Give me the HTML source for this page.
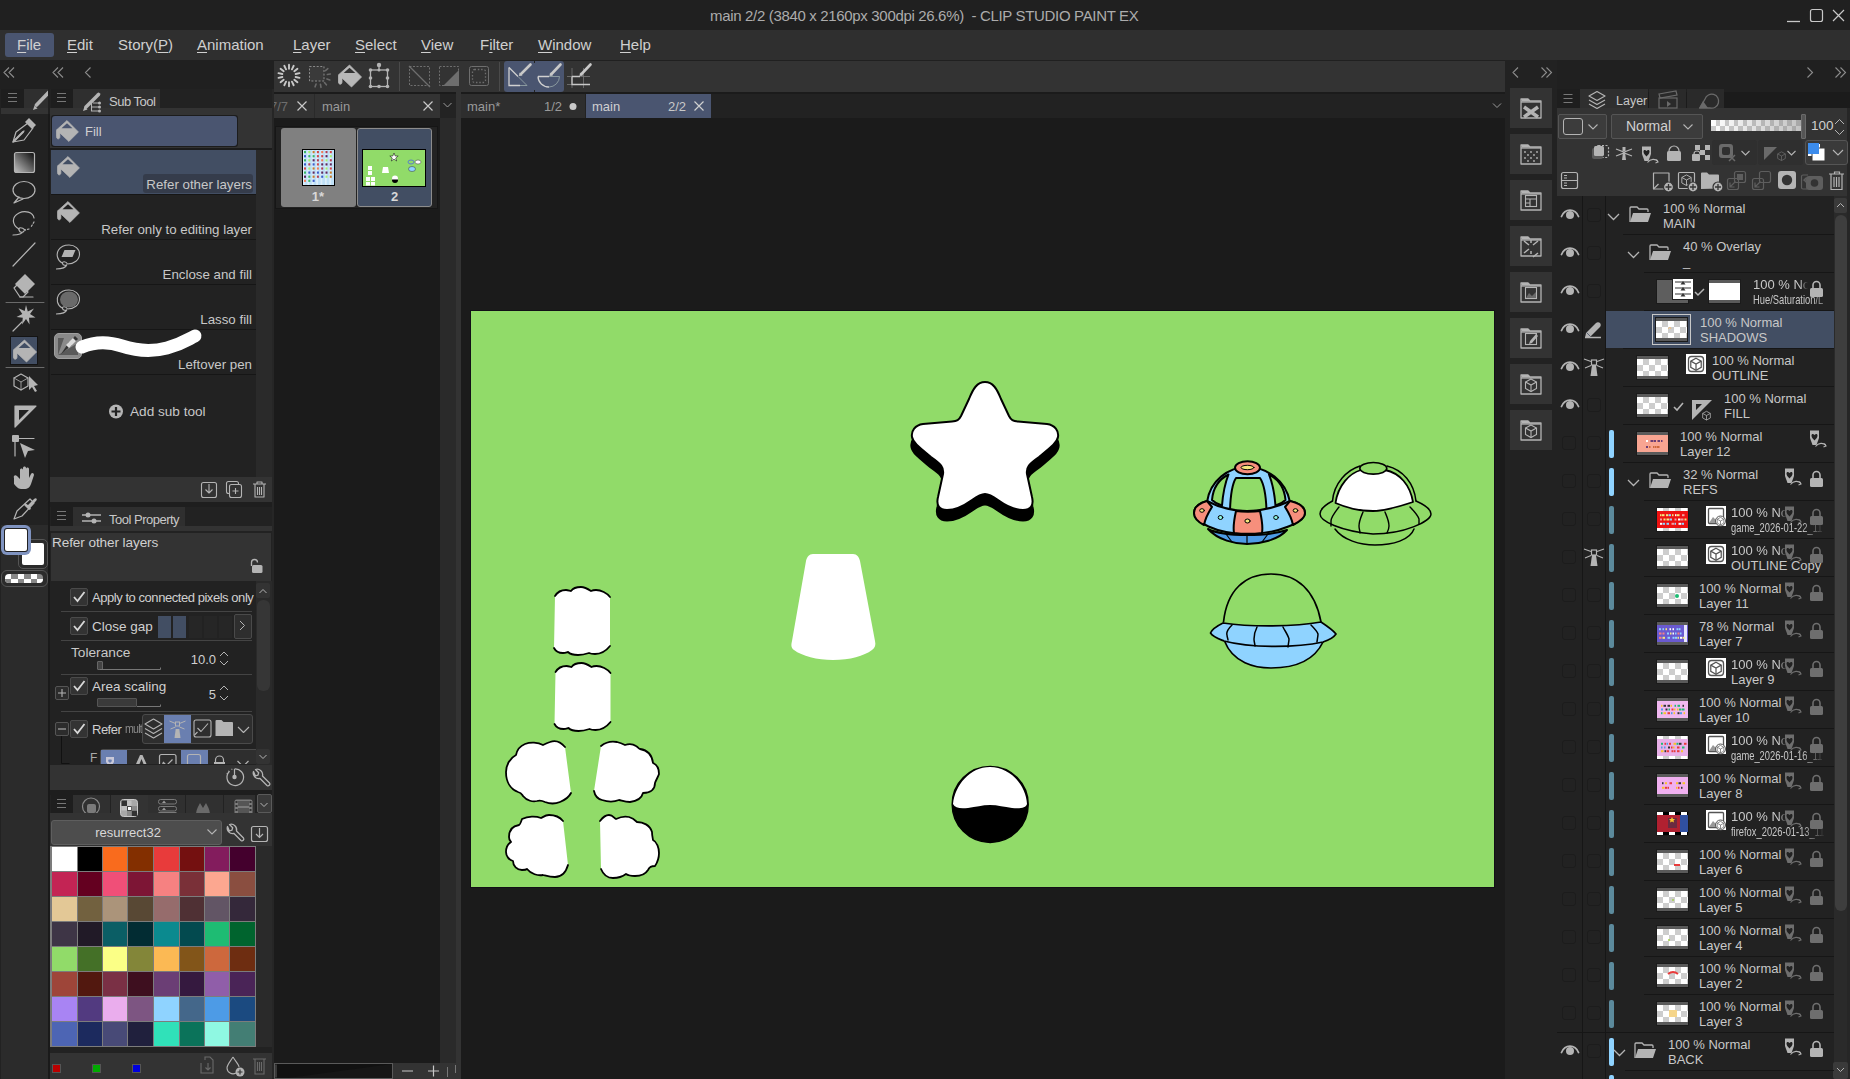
<!DOCTYPE html><html><head><meta charset="utf-8"><style>
*{margin:0;padding:0;box-sizing:border-box}
html,body{width:1850px;height:1079px;overflow:hidden;background:#1b1b1b;font-family:"Liberation Sans",sans-serif}
div,span,svg{position:absolute}
.t{white-space:nowrap;line-height:1}
</style></head><body><div style="left:0px;top:0px;width:1850px;height:30px;background:#202020;"></div>
<span class="t" style="left:710px;top:8px;font-size:15px;color:#acacac;letter-spacing:-0.33px">main 2/2 (3840 x 2160px 300dpi 26.6%)&nbsp; - CLIP STUDIO PAINT EX</span>
<div style="left:0px;top:30px;width:1850px;height:30px;background:#2f2f2f;"></div>
<div style="left:5px;top:33px;width:49px;height:24px;background:#4a5570;border-radius:3px"></div>
<span class="t" style="left:17px;top:37px;font-size:15px;color:#d0d0d0;text-decoration-thickness:1px;text-underline-offset:2px"><u>F</u>ile</span>
<span class="t" style="left:67px;top:37px;font-size:15px;color:#d0d0d0;text-decoration-thickness:1px;text-underline-offset:2px"><u>E</u>dit</span>
<span class="t" style="left:118px;top:37px;font-size:15px;color:#d0d0d0;text-decoration-thickness:1px;text-underline-offset:2px">Story(<u>P</u>)</span>
<span class="t" style="left:197px;top:37px;font-size:15px;color:#d0d0d0;text-decoration-thickness:1px;text-underline-offset:2px"><u>A</u>nimation</span>
<span class="t" style="left:293px;top:37px;font-size:15px;color:#d0d0d0;text-decoration-thickness:1px;text-underline-offset:2px"><u>L</u>ayer</span>
<span class="t" style="left:355px;top:37px;font-size:15px;color:#d0d0d0;text-decoration-thickness:1px;text-underline-offset:2px"><u>S</u>elect</span>
<span class="t" style="left:421px;top:37px;font-size:15px;color:#d0d0d0;text-decoration-thickness:1px;text-underline-offset:2px"><u>V</u>iew</span>
<span class="t" style="left:480px;top:37px;font-size:15px;color:#d0d0d0;text-decoration-thickness:1px;text-underline-offset:2px">F<u>i</u>lter</span>
<span class="t" style="left:538px;top:37px;font-size:15px;color:#d0d0d0;text-decoration-thickness:1px;text-underline-offset:2px"><u>W</u>indow</span>
<span class="t" style="left:620px;top:37px;font-size:15px;color:#d0d0d0;text-decoration-thickness:1px;text-underline-offset:2px"><u>H</u>elp</span>
<div style="left:0px;top:60px;width:1850px;height:32px;background:#202020;"></div>
<div style="left:274px;top:61px;width:1231px;height:31px;background:#333333;"></div>
<div style="left:0px;top:89px;width:48px;height:990px;background:#222222;"></div>
<div style="left:1px;top:89px;width:23px;height:19px;background:#1e1e1e;"></div>
<div style="left:24px;top:89px;width:24px;height:19px;background:#2f2f2f;"></div>
<div style="left:1px;top:108px;width:47px;height:6px;background:#333333;"></div>
<div style="left:48px;top:114px;width:2px;height:965px;background:#1a1a1a;"></div>
<div style="left:48px;top:89px;width:2px;height:25px;background:#202020;"></div>
<div style="left:10px;top:336px;width:28px;height:29px;background:#424e63;border:1px solid #141414"></div>
<div style="left:1px;top:525px;width:47px;height:554px;background:#2b2b2b;"></div>
<div style="left:18px;top:539px;width:30px;height:30px;background:#2b2b2b;border:1.5px solid #555;border-radius:5px"></div>
<div style="left:22px;top:543px;width:22px;height:22px;background:#ffffff;border-radius:2px"></div>
<div style="left:1px;top:525px;width:30px;height:30px;background:#7f93c0;border-radius:6px"></div>
<div style="left:4px;top:528px;width:24px;height:24px;background:#222;border-radius:3px"></div>
<div style="left:5px;top:529px;width:22px;height:22px;background:#ffffff;border-radius:2px"></div>
<div style="left:1px;top:570px;width:47px;height:17px;background:#2b2b2b;border:1.5px solid #555;border-radius:6px"></div>
<div style="left:5px;top:574px;width:38px;height:9px;border-radius:4px;overflow:hidden;background:repeating-linear-gradient(90deg,#fff 0 6.5px,#888 6.5px 13px)"><div style="left:0;top:4.5px;width:38px;height:4.5px;background:repeating-linear-gradient(90deg,#888 0 6.5px,#fff 6.5px 13px)"></div></div>
<div style="left:50px;top:89px;width:222px;height:990px;background:#222222;"></div>
<div style="left:51px;top:89px;width:22px;height:19px;background:#1e1e1e;"></div>
<div style="left:73px;top:89px;width:87px;height:19px;background:#2f2f2f;"></div>
<div style="left:50px;top:108px;width:222px;height:6px;background:#333333;"></div>
<span class="t" style="left:109px;top:95px;font-size:13px;color:#c8c8c8;letter-spacing:-0.5px">Sub Tool</span>
<div style="left:50px;top:114px;width:222px;height:34px;background:#333333;"></div>
<div style="left:51px;top:115px;width:187px;height:32px;background:#1c1c1c;border-radius:3px"></div>
<div style="left:52px;top:116px;width:185px;height:30px;background:#4a5570;border-radius:3px"></div>
<span class="t" style="left:85px;top:125px;font-size:13px;color:#d0d0d0;">Fill</span>
<div style="left:50px;top:148px;width:222px;height:2px;background:#1c1c1c;"></div>
<div style="left:50px;top:150px;width:206px;height:327px;background:#222222;"></div>
<div style="left:256px;top:150px;width:16px;height:327px;background:#2a2a2a;"></div>
<div style="left:51px;top:150px;width:205px;height:44px;background:#424e63;"></div>
<div style="left:143px;top:174px;width:110px;height:19px;background:#353c4b;border-radius:3px"></div>
<div style="left:51px;top:194px;width:205px;height:1px;background:#161616;"></div>
<div style="left:51px;top:239px;width:205px;height:1px;background:#161616;"></div>
<div style="left:51px;top:284px;width:205px;height:1px;background:#161616;"></div>
<div style="left:51px;top:329px;width:205px;height:1px;background:#161616;"></div>
<div style="left:51px;top:374px;width:205px;height:1px;background:#161616;"></div>
<span class="t" style="right:1598px;top:177.5px;font-size:13.3px;color:#c8c8c8;">Refer other layers</span>
<span class="t" style="right:1598px;top:222.5px;font-size:13.3px;color:#c8c8c8;">Refer only to editing layer</span>
<span class="t" style="right:1598px;top:267.5px;font-size:13.3px;color:#c8c8c8;">Enclose and fill</span>
<span class="t" style="right:1598px;top:312.5px;font-size:13.3px;color:#c8c8c8;">Lasso fill</span>
<span class="t" style="right:1598px;top:357.5px;font-size:13.3px;color:#c8c8c8;">Leftover pen</span>
<div style="left:54px;top:333px;width:28px;height:26px;background:#8a8a8a;border-radius:5px;border:1px solid #a0a0a0"></div>
<span class="t" style="left:130px;top:404.5px;font-size:13.6px;color:#c8c8c8;">Add sub tool</span>
<div style="left:50px;top:477px;width:222px;height:25px;background:#333333;"></div>
<div style="left:50px;top:502px;width:222px;height:5px;background:#1e1e1e;"></div>
<div style="left:51px;top:507px;width:22px;height:19px;background:#1e1e1e;"></div>
<div style="left:73px;top:507px;width:112px;height:19px;background:#2f2f2f;"></div>
<div style="left:50px;top:526px;width:222px;height:5px;background:#333333;"></div>
<span class="t" style="left:109px;top:513px;font-size:13px;color:#c8c8c8;letter-spacing:-0.5px">Tool Property</span>
<div style="left:50px;top:531px;width:222px;height:2px;background:#222222;"></div>
<div style="left:51px;top:533px;width:220px;height:48px;background:#333333;"></div>
<span class="t" style="left:52px;top:535.5px;font-size:13.6px;color:#d0d0d0;letter-spacing:-0.1px">Refer other layers</span>
<div style="left:50px;top:581px;width:206px;height:184px;background:#222222;"></div>
<div style="left:256px;top:581px;width:16px;height:184px;background:#2a2a2a;"></div>
<div style="left:256px;top:583px;width:14px;height:15px;background:#333333;border-radius:2px"></div>
<div style="left:257px;top:600px;width:13px;height:91px;background:#363636;border-radius:6px"></div>
<div style="left:256px;top:749px;width:14px;height:15px;background:#333333;border-radius:2px"></div>
<div style="left:61px;top:611px;width:191px;height:1px;background:#444444;"></div>
<div style="left:61px;top:640px;width:191px;height:1px;background:#444444;"></div>
<div style="left:61px;top:674px;width:191px;height:1px;background:#444444;"></div>
<div style="left:61px;top:711px;width:191px;height:1px;background:#444444;"></div>
<div style="left:70px;top:588px;width:18px;height:18px;background:#333333;border:1px solid #4a4a4a;border-radius:2px"></div>
<span class="t" style="left:92px;top:591px;font-size:13px;color:#d0d0d0;letter-spacing:-0.45px">Apply to connected pixels only</span>
<div style="left:70px;top:617px;width:18px;height:18px;background:#333333;border:1px solid #4a4a4a;border-radius:2px"></div>
<span class="t" style="left:92px;top:619.5px;font-size:13.5px;color:#d0d0d0;">Close gap</span>
<div style="left:158px;top:616px;width:13px;height:22px;background:#424e63;"></div>
<div style="left:173px;top:616px;width:13px;height:22px;background:#424e63;"></div>
<div style="left:189px;top:616px;width:13px;height:22px;background:#262626;"></div>
<div style="left:204px;top:616px;width:13px;height:22px;background:#262626;"></div>
<div style="left:219px;top:616px;width:13px;height:22px;background:#262626;"></div>
<div style="left:234px;top:614px;width:18px;height:25px;background:#2e2e2e;border:1px solid #4a4a4a;border-radius:2px"></div>
<span class="t" style="left:71px;top:645.5px;font-size:13.7px;color:#c8c8c8;">Tolerance</span>
<div style="left:97px;top:661px;width:6px;height:9px;background:#444;border:1px solid #666;border-radius:1px"></div>
<span class="t" style="right:1634px;top:653px;font-size:13px;color:#d0d0d0;">10.0</span>
<div style="left:55px;top:686px;width:14px;height:14px;background:#2c2c2c;border:1px solid #555;border-radius:2px"></div>
<div style="left:70px;top:677px;width:18px;height:18px;background:#333333;border:1px solid #4a4a4a;border-radius:2px"></div>
<span class="t" style="left:92px;top:679.5px;font-size:13.5px;color:#d0d0d0;">Area scaling</span>
<div style="left:97px;top:698px;width:40px;height:9px;background:#3a3a3a;border:1px solid #555;border-radius:1px"></div>
<span class="t" style="right:1634px;top:688px;font-size:13px;color:#d0d0d0;">5</span>
<div style="left:55px;top:722px;width:14px;height:14px;background:#2c2c2c;border:1px solid #555;border-radius:2px"></div>
<div style="left:70px;top:720px;width:18px;height:18px;background:#333333;border:1px solid #4a4a4a;border-radius:2px"></div>
<span class="t" style="left:92px;top:723px;font-size:13px;color:#d0d0d0;letter-spacing:-0.5px">Refer</span>
<span class="t" style="left:125px;top:723px;font-size:12.5px;color:#8a8a8a;letter-spacing:-0.9px;transform:scaleX(0.85);transform-origin:0 0">multi</span>
<div style="left:142px;top:714px;width:111px;height:30px;background:#2e2e2e;border:1px solid #4a4a4a;border-radius:3px"></div>
<div style="left:164px;top:715px;width:27px;height:28px;background:#6a7fb0;"></div>
<div style="left:50px;top:744px;width:206px;height:20px;overflow:hidden"><div style="left:50px;top:4.5px;width:203px;height:30px;background:#2e2e2e;border:1px solid #4a4a4a;border-radius:3px"></div><div style="left:50.5px;top:5.5px;width:26.5px;height:28px;background:#6a7fb0"></div><div style="left:131px;top:5.5px;width:27px;height:28px;background:#6a7fb0"></div><span class="t" style="left:40px;top:8px;font-size:12px;color:#aaa">F</span></div>
<div style="left:50px;top:765px;width:222px;height:25px;background:#333333;"></div>
<div style="left:50px;top:790px;width:222px;height:5px;background:#1e1e1e;"></div>
<div style="left:51px;top:795px;width:22px;height:18px;background:#1e1e1e;"></div>
<div style="left:73px;top:795px;width:37px;height:18px;background:#303030;"></div>
<div style="left:111px;top:795px;width:36px;height:18px;background:#333333;"></div>
<div style="left:148px;top:795px;width:37px;height:18px;background:#303030;"></div>
<div style="left:186px;top:795px;width:37px;height:18px;background:#303030;"></div>
<div style="left:224px;top:795px;width:31px;height:18px;background:#303030;"></div>
<div style="left:111px;top:795px;width:37px;height:25px;background:#333333;"></div>
<div style="left:257px;top:794px;width:15px;height:19px;background:#3a3a3a;border:1px solid #5a5a5a;border-radius:2px"></div>
<div style="left:50px;top:813px;width:222px;height:7px;background:#333333;"></div>
<div style="left:50px;top:820px;width:222px;height:26px;background:#333333;"></div>
<div style="left:51px;top:820px;width:171px;height:25px;background:#4d4d4d;border:1px solid #5e5e5e;border-radius:3px"></div>
<span class="t" style="left:-72px;width:400px;text-align:center;top:826px;font-size:13px;color:#d8d8d8;">resurrect32</span>
<div style="left:50px;top:846px;width:206px;height:201px;background:#7c7c7c;"></div>
<div style="left:256px;top:846px;width:16px;height:201px;background:#2a2a2a;"></div>
<div style="left:52px;top:847px;width:25px;height:24px;background:#ffffff;"></div>
<div style="left:78px;top:847px;width:24px;height:24px;background:#000000;"></div>
<div style="left:103px;top:847px;width:24px;height:24px;background:#f96b1d;"></div>
<div style="left:128px;top:847px;width:25px;height:24px;background:#832f00;"></div>
<div style="left:154px;top:847px;width:25px;height:24px;background:#e83b3b;"></div>
<div style="left:180px;top:847px;width:24px;height:24px;background:#741010;"></div>
<div style="left:205px;top:847px;width:24px;height:24px;background:#831c5d;"></div>
<div style="left:230px;top:847px;width:25px;height:24px;background:#44002d;"></div>
<div style="left:52px;top:872px;width:25px;height:24px;background:#c32454;"></div>
<div style="left:78px;top:872px;width:24px;height:24px;background:#640020;"></div>
<div style="left:103px;top:872px;width:24px;height:24px;background:#f04f78;"></div>
<div style="left:128px;top:872px;width:25px;height:24px;background:#7d1535;"></div>
<div style="left:154px;top:872px;width:25px;height:24px;background:#f68181;"></div>
<div style="left:180px;top:872px;width:24px;height:24px;background:#7a3038;"></div>
<div style="left:205px;top:872px;width:24px;height:24px;background:#fca790;"></div>
<div style="left:230px;top:872px;width:25px;height:24px;background:#8a4e40;"></div>
<div style="left:52px;top:897px;width:25px;height:24px;background:#e3c896;"></div>
<div style="left:78px;top:897px;width:24px;height:24px;background:#72613f;"></div>
<div style="left:103px;top:897px;width:24px;height:24px;background:#ab947a;"></div>
<div style="left:128px;top:897px;width:25px;height:24px;background:#584834;"></div>
<div style="left:154px;top:897px;width:25px;height:24px;background:#966c6c;"></div>
<div style="left:180px;top:897px;width:24px;height:24px;background:#4f3034;"></div>
<div style="left:205px;top:897px;width:24px;height:24px;background:#625565;"></div>
<div style="left:230px;top:897px;width:25px;height:24px;background:#34283a;"></div>
<div style="left:52px;top:922px;width:25px;height:24px;background:#3e3546;"></div>
<div style="left:78px;top:922px;width:24px;height:24px;background:#211a27;"></div>
<div style="left:103px;top:922px;width:24px;height:24px;background:#0b5e65;"></div>
<div style="left:128px;top:922px;width:25px;height:24px;background:#022c33;"></div>
<div style="left:154px;top:922px;width:25px;height:24px;background:#0b8a8f;"></div>
<div style="left:180px;top:922px;width:24px;height:24px;background:#034a4f;"></div>
<div style="left:205px;top:922px;width:24px;height:24px;background:#1ebc73;"></div>
<div style="left:230px;top:922px;width:25px;height:24px;background:#00642e;"></div>
<div style="left:52px;top:947px;width:25px;height:24px;background:#91db69;"></div>
<div style="left:78px;top:947px;width:24px;height:24px;background:#447027;"></div>
<div style="left:103px;top:947px;width:24px;height:24px;background:#fbff86;"></div>
<div style="left:128px;top:947px;width:25px;height:24px;background:#838639;"></div>
<div style="left:154px;top:947px;width:25px;height:24px;background:#fbb954;"></div>
<div style="left:180px;top:947px;width:24px;height:24px;background:#825519;"></div>
<div style="left:205px;top:947px;width:24px;height:24px;background:#cd683d;"></div>
<div style="left:230px;top:947px;width:25px;height:24px;background:#6e2d11;"></div>
<div style="left:52px;top:972px;width:25px;height:24px;background:#9e4539;"></div>
<div style="left:78px;top:972px;width:24px;height:24px;background:#52180f;"></div>
<div style="left:103px;top:972px;width:24px;height:24px;background:#7a3045;"></div>
<div style="left:128px;top:972px;width:25px;height:24px;background:#3e0f1f;"></div>
<div style="left:154px;top:972px;width:25px;height:24px;background:#6b3e75;"></div>
<div style="left:180px;top:972px;width:24px;height:24px;background:#35193f;"></div>
<div style="left:205px;top:972px;width:24px;height:24px;background:#905ea9;"></div>
<div style="left:230px;top:972px;width:25px;height:24px;background:#4a2457;"></div>
<div style="left:52px;top:997px;width:25px;height:24px;background:#a884f3;"></div>
<div style="left:78px;top:997px;width:24px;height:24px;background:#523a80;"></div>
<div style="left:103px;top:997px;width:24px;height:24px;background:#eaaded;"></div>
<div style="left:128px;top:997px;width:25px;height:24px;background:#7d5582;"></div>
<div style="left:154px;top:997px;width:25px;height:24px;background:#8fd3ff;"></div>
<div style="left:180px;top:997px;width:24px;height:24px;background:#44678a;"></div>
<div style="left:205px;top:997px;width:24px;height:24px;background:#4d9be6;"></div>
<div style="left:230px;top:997px;width:25px;height:24px;background:#1b4a80;"></div>
<div style="left:52px;top:1022px;width:25px;height:24px;background:#4d65b4;"></div>
<div style="left:78px;top:1022px;width:24px;height:24px;background:#1c2a5e;"></div>
<div style="left:103px;top:1022px;width:24px;height:24px;background:#484a77;"></div>
<div style="left:128px;top:1022px;width:25px;height:24px;background:#20203d;"></div>
<div style="left:154px;top:1022px;width:25px;height:24px;background:#30e1b9;"></div>
<div style="left:180px;top:1022px;width:24px;height:24px;background:#0b735a;"></div>
<div style="left:205px;top:1022px;width:24px;height:24px;background:#8ff8e2;"></div>
<div style="left:230px;top:1022px;width:25px;height:24px;background:#437e74;"></div>
<div style="left:50px;top:1047px;width:222px;height:6px;background:#222222;"></div>
<div style="left:50px;top:1053px;width:222px;height:26px;background:#333333;"></div>
<div style="left:52px;top:1064px;width:9px;height:9px;background:#bb0000;border:1px solid #555"></div>
<div style="left:92px;top:1064px;width:9px;height:9px;background:#00aa00;border:1px solid #555"></div>
<div style="left:132px;top:1064px;width:9px;height:9px;background:#0000dd;border:1px solid #555"></div>
<div style="left:504px;top:61px;width:60px;height:30.5px;background:#4a5570;border-radius:3px"></div>
<div style="left:533.5px;top:61px;width:1px;height:1.5px;background:#222;"></div>
<div style="left:533.5px;top:90px;width:1px;height:1.5px;background:#222;"></div>
<div style="left:272px;top:89px;width:2px;height:990px;background:#262626;"></div>
<div style="left:274px;top:94px;width:166px;height:24px;background:#2a2a2a;"></div>
<div style="left:274px;top:94px;width:40px;height:24px;background:#333333;"></div>
<div style="left:315px;top:94px;width:125px;height:24px;background:#333333;"></div>
<div style="left:274px;top:94px;width:40px;height:24px;overflow:hidden"><span class="t" style="left:-4px;top:6px;font-size:13px;color:#6e6e6e">7/7</span></div>
<span class="t" style="left:322px;top:100px;font-size:13px;color:#9a9a9a;">main</span>
<div style="left:440px;top:94px;width:21px;height:24px;background:#232323;"></div>
<div style="left:274px;top:118px;width:166px;height:945px;background:#1b1b1b;"></div>
<div style="left:440px;top:118px;width:16px;height:945px;background:#2a2a2a;"></div>
<div style="left:456px;top:92px;width:5px;height:987px;background:#333333;"></div>
<div style="left:275px;top:126px;width:163px;height:83px;background:#232323;border:1px solid #161616"></div>
<div style="left:281px;top:128px;width:75px;height:79px;background:#808080;border-radius:3px"></div>
<div style="left:357px;top:128px;width:75px;height:79px;background:#424e63;border:1px solid #8c8c8c;border-radius:3px"></div>
<div style="left:302px;top:149px;width:33px;height:37px;background:#000;"></div>
<div style="left:303px;top:150px;width:31px;height:35px;background:#bfe0f7;background-image:linear-gradient(90deg,rgba(255,255,255,.45) 50%,transparent 50%);background-size:4.4px 4px"></div>
<span class="t" style="left:118px;width:400px;text-align:center;top:190px;font-size:13px;color:#d8d8d8;font-weight:bold">1*</span>
<div style="left:362px;top:149px;width:64px;height:38px;background:#000;"></div>
<div style="left:363px;top:150px;width:62px;height:36px;background:#91db69;"></div>
<span class="t" style="left:194.5px;width:400px;text-align:center;top:190px;font-size:13px;color:#d8d8d8;font-weight:bold">2</span>
<div style="left:274px;top:1063px;width:182px;height:16px;background:#333333;"></div>
<div style="left:274px;top:1063px;width:119px;height:16px;background:#111111;border:1px solid #5a5a5a"></div>
<div style="left:461px;top:94px;width:1044px;height:24px;background:#222222;"></div>
<div style="left:461px;top:94px;width:124px;height:24px;background:#2e2e2e;"></div>
<span class="t" style="left:467px;top:100px;font-size:13px;color:#9a9a9a;">main*</span>
<span class="t" style="left:544px;top:100px;font-size:13px;color:#9a9a9a;">1/2</span>
<div style="left:586px;top:94px;width:125px;height:24px;background:#4a5570;"></div>
<span class="t" style="left:592px;top:100px;font-size:13px;color:#d0d0d0;">main</span>
<span class="t" style="left:668px;top:100px;font-size:13px;color:#c8c8c8;">2/2</span>
<div style="left:461px;top:118px;width:1044px;height:961px;background:#1b1b1b;"></div>
<div style="left:470px;top:310px;width:1025px;height:578px;background:#120f16;"></div>
<div style="left:471px;top:311px;width:1023px;height:576px;background:#91db69;"></div>
<div style="left:1505px;top:60px;width:52px;height:1019px;background:#222222;"></div>
<div style="left:1555px;top:92px;width:2px;height:987px;background:#222222;"></div>
<div style="left:1510px;top:88px;width:42px;height:40px;background:#333333;"></div>
<div style="left:1510px;top:134px;width:42px;height:40px;background:#333333;"></div>
<div style="left:1510px;top:180px;width:42px;height:40px;background:#333333;"></div>
<div style="left:1510px;top:226px;width:42px;height:40px;background:#333333;"></div>
<div style="left:1510px;top:272px;width:42px;height:40px;background:#333333;"></div>
<div style="left:1510px;top:318px;width:42px;height:40px;background:#333333;"></div>
<div style="left:1510px;top:364px;width:42px;height:40px;background:#333333;"></div>
<div style="left:1510px;top:410px;width:42px;height:40px;background:#333333;"></div>
<div style="left:1557px;top:60px;width:293px;height:32px;background:#202020;"></div>
<div style="left:1557px;top:89px;width:23px;height:19px;background:#1e1e1e;"></div>
<div style="left:1580px;top:89px;width:68px;height:19px;background:#2f2f2f;"></div>
<div style="left:1649px;top:89px;width:37px;height:19px;background:#2a2a2a;"></div>
<div style="left:1687px;top:89px;width:37px;height:19px;background:#2a2a2a;"></div>
<span class="t" style="left:1616px;top:95px;font-size:12.5px;color:#c8c8c8;">Layer</span>
<div style="left:1557px;top:108px;width:290px;height:88px;background:#333333;"></div>
<div style="left:1847px;top:108px;width:3px;height:971px;background:#262626;"></div>
<div style="left:1558px;top:114px;width:49px;height:25px;background:#3c3c3c;border:1px solid #555;border-radius:2px"></div>
<div style="left:1563px;top:118px;width:20px;height:17px;background:#3c3c3c;border:1.3px solid #b4b4b4;border-radius:3px"></div>
<div style="left:1611px;top:114px;width:92px;height:25px;background:#3c3c3c;border:1px solid #555;border-radius:2px"></div>
<span class="t" style="left:1626px;top:119px;font-size:14px;color:#d0d0d0;">Normal</span>
<div style="left:1711px;top:120px;width:91px;height:11px;background:linear-gradient(90deg,rgba(51,51,51,0) 0%,rgba(120,120,120,.45) 100%),repeating-linear-gradient(90deg,#ffffff 0 4.5px,#cccccc 4.5px 9px)"><div style="left:0;top:5.5px;width:91px;height:5.5px;background:linear-gradient(90deg,rgba(51,51,51,0) 0%,rgba(120,120,120,.45) 100%),repeating-linear-gradient(90deg,#cccccc 0 4.5px,#ffffff 4.5px 9px)"></div></div>
<div style="left:1801px;top:114px;width:5px;height:25px;background:#555555;border:1px solid #6a6a6a;border-radius:1px"></div>
<span class="t" style="left:1811px;top:119px;font-size:13.5px;color:#d0d0d0;">100</span>
<div style="left:1712px;top:140px;width:45px;height:25px;background:#2f2f2f;border-radius:3px"></div>
<div style="left:1758px;top:140px;width:45px;height:25px;background:#2f2f2f;border-radius:3px"></div>
<div style="left:1805px;top:140px;width:43px;height:25px;background:#3a3a3a;border:1px solid #555;border-radius:3px"></div>
<div style="left:1557px;top:196px;width:277px;height:883px;background:#222222;"></div>
<div style="left:1834px;top:196px;width:13px;height:883px;background:#2a2a2a;"></div>
<div style="left:1834px;top:198px;width:13px;height:15px;background:#3a3a3a;border-radius:2px"></div>
<div style="left:1835px;top:215px;width:12px;height:696px;background:#3e3e3e;border-radius:6px"></div>
<div style="left:1833px;top:1062px;width:15px;height:17px;background:#3a3a3a;border-radius:2px"></div>
<div style="left:1582px;top:196px;width:1px;height:883px;background:#161616;"></div>
<div style="left:1605px;top:196px;width:1px;height:883px;background:#161616;"></div>
<div style="left:1587px;top:208px;width:14px;height:14px;background:transparent;border:1.5px solid #1c1c1c;border-radius:3px"></div>
<span class="t" style="left:1663px;top:202px;font-size:13px;color:#c8c8c8;">100 % Normal</span>
<span class="t" style="left:1663px;top:217px;font-size:13px;color:#c8c8c8;">MAIN</span>
<div style="left:1623px;top:234px;width:211px;height:1px;background:#161616;"></div>
<div style="left:1587px;top:246px;width:14px;height:14px;background:transparent;border:1.5px solid #1c1c1c;border-radius:3px"></div>
<span class="t" style="left:1683px;top:240px;font-size:13px;color:#c8c8c8;">40 % Overlay</span>
<span class="t" style="left:1683px;top:255px;font-size:13px;color:#c8c8c8;">_</span>
<div style="left:1644px;top:272px;width:190px;height:1px;background:#161616;"></div>
<div style="left:1587px;top:284px;width:14px;height:14px;background:transparent;border:1.5px solid #1c1c1c;border-radius:3px"></div>
<div style="left:1656px;top:279px;width:33px;height:25px;background:#1b1b1b;"></div>
<div style="left:1657px;top:280px;width:31px;height:23px;background:#5e5e5e;"></div>
<div style="left:1672px;top:278px;width:22px;height:22px;background:#ffffff;border:1px solid #222"></div>
<div style="left:1708px;top:279px;width:33px;height:25px;background:#1b1b1b;"></div>
<div style="left:1709px;top:280px;width:31px;height:3px;background:#5a5a5a;"></div>
<div style="left:1709px;top:300px;width:31px;height:3px;background:#5a5a5a;"></div>
<div style="left:1709px;top:283px;width:31px;height:17px;background:#ffffff;"></div>
<span class="t" style="left:1753px;top:278px;font-size:13px;color:#c8c8c8;height:16px;width:55px;overflow:hidden;-webkit-mask-image:linear-gradient(90deg,#000 85%,transparent)">100 % Normal</span>
<span class="t" style="left:1753px;top:293px;font-size:13px;color:#c8c8c8;transform:scaleX(0.72);transform-origin:0 0;height:16px;width:111px;overflow:hidden;-webkit-mask-image:linear-gradient(90deg,#000 75%,transparent)">Hue/Saturation/L</span>
<div style="left:1644px;top:310px;width:190px;height:1px;background:#161616;"></div>
<div style="left:1606px;top:311px;width:228px;height:37px;background:#424e63;"></div>
<div style="left:1652px;top:314px;width:39px;height:31px;background:transparent;border:1px solid #c8c8c8"></div>
<div style="left:1655px;top:317px;width:33px;height:25px;background:#1b1b1b;"></div>
<div style="left:1656px;top:318px;width:31px;height:3px;background:#5a5a5a;"></div>
<div style="left:1656px;top:338px;width:31px;height:3px;background:#5a5a5a;"></div>
<div style="left:1656px;top:321px;width:31px;height:17px;background-color:#fff;background-image:linear-gradient(45deg,#cdcdcd 25%,transparent 25%,transparent 75%,#cdcdcd 75%),linear-gradient(45deg,#cdcdcd 25%,transparent 25%,transparent 75%,#cdcdcd 75%);background-size:12px 12px;background-position:0 0,6px 6px"></div>
<span class="t" style="left:1700px;top:316px;font-size:13px;color:#c8c8c8;">100 % Normal</span>
<span class="t" style="left:1700px;top:331px;font-size:13px;color:#c8c8c8;">SHADOWS</span>
<div style="left:1623px;top:348px;width:211px;height:1px;background:#161616;"></div>
<div style="left:1636px;top:355px;width:33px;height:25px;background:#1b1b1b;"></div>
<div style="left:1637px;top:356px;width:31px;height:3px;background:#5a5a5a;"></div>
<div style="left:1637px;top:376px;width:31px;height:3px;background:#5a5a5a;"></div>
<div style="left:1637px;top:359px;width:31px;height:17px;background-color:#fff;background-image:linear-gradient(45deg,#cdcdcd 25%,transparent 25%,transparent 75%,#cdcdcd 75%),linear-gradient(45deg,#cdcdcd 25%,transparent 25%,transparent 75%,#cdcdcd 75%);background-size:12px 12px;background-position:0 0,6px 6px"></div>
<div style="left:1685px;top:353px;width:22px;height:22px;background:#ffffff;border:1px solid #222"></div>
<span class="t" style="left:1712px;top:354px;font-size:13px;color:#c8c8c8;">100 % Normal</span>
<span class="t" style="left:1712px;top:369px;font-size:13px;color:#c8c8c8;">OUTLINE</span>
<div style="left:1623px;top:386px;width:211px;height:1px;background:#161616;"></div>
<div style="left:1587px;top:398px;width:14px;height:14px;background:transparent;border:1.5px solid #1c1c1c;border-radius:3px"></div>
<div style="left:1636px;top:393px;width:33px;height:25px;background:#1b1b1b;"></div>
<div style="left:1637px;top:394px;width:31px;height:3px;background:#5a5a5a;"></div>
<div style="left:1637px;top:414px;width:31px;height:3px;background:#5a5a5a;"></div>
<div style="left:1637px;top:397px;width:31px;height:17px;background-color:#fff;background-image:linear-gradient(45deg,#cdcdcd 25%,transparent 25%,transparent 75%,#cdcdcd 75%),linear-gradient(45deg,#cdcdcd 25%,transparent 25%,transparent 75%,#cdcdcd 75%);background-size:12px 12px;background-position:0 0,6px 6px"></div>
<span class="t" style="left:1724px;top:392px;font-size:13px;color:#c8c8c8;">100 % Normal</span>
<span class="t" style="left:1724px;top:407px;font-size:13px;color:#c8c8c8;">FILL</span>
<div style="left:1623px;top:424px;width:211px;height:1px;background:#161616;"></div>
<div style="left:1562px;top:436px;width:14px;height:14px;background:transparent;border:1.5px solid #1c1c1c;border-radius:3px"></div>
<div style="left:1587px;top:436px;width:14px;height:14px;background:transparent;border:1.5px solid #1c1c1c;border-radius:3px"></div>
<div style="left:1609px;top:430px;width:5px;height:28px;background:#8fd3ff;border-radius:2px"></div>
<div style="left:1636px;top:431px;width:33px;height:25px;background:#1b1b1b;"></div>
<div style="left:1637px;top:432px;width:31px;height:3px;background:#5a5a5a;"></div>
<div style="left:1637px;top:452px;width:31px;height:3px;background:#5a5a5a;"></div>
<div style="left:1637px;top:435px;width:31px;height:17px;background:#f8a592;"></div>
<span class="t" style="left:1680px;top:430px;font-size:13px;color:#c8c8c8;">100 % Normal</span>
<span class="t" style="left:1680px;top:445px;font-size:13px;color:#c8c8c8;">Layer 12</span>
<div style="left:1623px;top:462px;width:211px;height:1px;background:#161616;"></div>
<div style="left:1562px;top:474px;width:14px;height:14px;background:transparent;border:1.5px solid #1c1c1c;border-radius:3px"></div>
<div style="left:1587px;top:474px;width:14px;height:14px;background:transparent;border:1.5px solid #1c1c1c;border-radius:3px"></div>
<div style="left:1609px;top:468px;width:5px;height:28px;background:#8fd3ff;border-radius:2px"></div>
<span class="t" style="left:1683px;top:468px;font-size:13px;color:#c8c8c8;">32 % Normal</span>
<span class="t" style="left:1683px;top:483px;font-size:13px;color:#c8c8c8;">REFS</span>
<div style="left:1644px;top:500px;width:190px;height:1px;background:#161616;"></div>
<div style="left:1562px;top:512px;width:14px;height:14px;background:transparent;border:1.5px solid #1c1c1c;border-radius:3px"></div>
<div style="left:1587px;top:512px;width:14px;height:14px;background:transparent;border:1.5px solid #1c1c1c;border-radius:3px"></div>
<div style="left:1609px;top:506px;width:5px;height:28px;background:#5c8a9c;border-radius:2px"></div>
<div style="left:1656px;top:507px;width:33px;height:25px;background:#1b1b1b;"></div>
<div style="left:1657px;top:508px;width:31px;height:3px;background:#5a5a5a;"></div>
<div style="left:1657px;top:528px;width:31px;height:3px;background:#5a5a5a;"></div>
<div style="left:1657px;top:511px;width:31px;height:17px;background:#ee1111;"></div>
<div style="left:1705px;top:505px;width:22px;height:22px;background:#ffffff;border:1px solid #222"></div>
<span class="t" style="left:1731px;top:506px;font-size:13px;color:#c8c8c8;height:16px;width:56px;overflow:hidden;-webkit-mask-image:linear-gradient(90deg,#000 85%,transparent)">100 % Normal</span>
<span class="t" style="left:1731px;top:521px;font-size:13px;color:#c8c8c8;transform:scaleX(0.72);transform-origin:0 0;height:16px;width:131px;overflow:hidden;-webkit-mask-image:linear-gradient(90deg,#000 75%,transparent)">game_2026-01-22_11</span>
<div style="left:1644px;top:538px;width:190px;height:1px;background:#161616;"></div>
<div style="left:1562px;top:550px;width:14px;height:14px;background:transparent;border:1.5px solid #1c1c1c;border-radius:3px"></div>
<div style="left:1609px;top:544px;width:5px;height:28px;background:#5c8a9c;border-radius:2px"></div>
<div style="left:1656px;top:545px;width:33px;height:25px;background:#1b1b1b;"></div>
<div style="left:1657px;top:546px;width:31px;height:3px;background:#5a5a5a;"></div>
<div style="left:1657px;top:566px;width:31px;height:3px;background:#5a5a5a;"></div>
<div style="left:1657px;top:549px;width:31px;height:17px;background-color:#fff;background-image:linear-gradient(45deg,#cdcdcd 25%,transparent 25%,transparent 75%,#cdcdcd 75%),linear-gradient(45deg,#cdcdcd 25%,transparent 25%,transparent 75%,#cdcdcd 75%);background-size:12px 12px;background-position:0 0,6px 6px"></div>
<div style="left:1705px;top:543px;width:22px;height:22px;background:#ffffff;border:1px solid #222"></div>
<span class="t" style="left:1731px;top:544px;font-size:13px;color:#c8c8c8;height:16px;width:56px;overflow:hidden;-webkit-mask-image:linear-gradient(90deg,#000 85%,transparent)">100 % Normal</span>
<span class="t" style="left:1731px;top:559px;font-size:13px;color:#c8c8c8;">OUTLINE Copy</span>
<div style="left:1644px;top:576px;width:190px;height:1px;background:#161616;"></div>
<div style="left:1562px;top:588px;width:14px;height:14px;background:transparent;border:1.5px solid #1c1c1c;border-radius:3px"></div>
<div style="left:1587px;top:588px;width:14px;height:14px;background:transparent;border:1.5px solid #1c1c1c;border-radius:3px"></div>
<div style="left:1609px;top:582px;width:5px;height:28px;background:#5c8a9c;border-radius:2px"></div>
<div style="left:1656px;top:583px;width:33px;height:25px;background:#1b1b1b;"></div>
<div style="left:1657px;top:584px;width:31px;height:3px;background:#5a5a5a;"></div>
<div style="left:1657px;top:604px;width:31px;height:3px;background:#5a5a5a;"></div>
<div style="left:1657px;top:587px;width:31px;height:17px;background-color:#fff;background-image:linear-gradient(45deg,#cdcdcd 25%,transparent 25%,transparent 75%,#cdcdcd 75%),linear-gradient(45deg,#cdcdcd 25%,transparent 25%,transparent 75%,#cdcdcd 75%);background-size:12px 12px;background-position:0 0,6px 6px"></div>
<span class="t" style="left:1699px;top:582px;font-size:13px;color:#c8c8c8;">100 % Normal</span>
<span class="t" style="left:1699px;top:597px;font-size:13px;color:#c8c8c8;">Layer 11</span>
<div style="left:1644px;top:614px;width:190px;height:1px;background:#161616;"></div>
<div style="left:1562px;top:626px;width:14px;height:14px;background:transparent;border:1.5px solid #1c1c1c;border-radius:3px"></div>
<div style="left:1587px;top:626px;width:14px;height:14px;background:transparent;border:1.5px solid #1c1c1c;border-radius:3px"></div>
<div style="left:1609px;top:620px;width:5px;height:28px;background:#5c8a9c;border-radius:2px"></div>
<div style="left:1656px;top:621px;width:33px;height:25px;background:#1b1b1b;"></div>
<div style="left:1657px;top:622px;width:31px;height:3px;background:#5a5a5a;"></div>
<div style="left:1657px;top:642px;width:31px;height:3px;background:#5a5a5a;"></div>
<div style="left:1657px;top:625px;width:31px;height:17px;background:#6a5ad0;"></div>
<span class="t" style="left:1699px;top:620px;font-size:13px;color:#c8c8c8;">78 % Normal</span>
<span class="t" style="left:1699px;top:635px;font-size:13px;color:#c8c8c8;">Layer 7</span>
<div style="left:1644px;top:652px;width:190px;height:1px;background:#161616;"></div>
<div style="left:1562px;top:664px;width:14px;height:14px;background:transparent;border:1.5px solid #1c1c1c;border-radius:3px"></div>
<div style="left:1587px;top:664px;width:14px;height:14px;background:transparent;border:1.5px solid #1c1c1c;border-radius:3px"></div>
<div style="left:1609px;top:658px;width:5px;height:28px;background:#5c8a9c;border-radius:2px"></div>
<div style="left:1656px;top:659px;width:33px;height:25px;background:#1b1b1b;"></div>
<div style="left:1657px;top:660px;width:31px;height:3px;background:#5a5a5a;"></div>
<div style="left:1657px;top:680px;width:31px;height:3px;background:#5a5a5a;"></div>
<div style="left:1657px;top:663px;width:31px;height:17px;background-color:#fff;background-image:linear-gradient(45deg,#cdcdcd 25%,transparent 25%,transparent 75%,#cdcdcd 75%),linear-gradient(45deg,#cdcdcd 25%,transparent 25%,transparent 75%,#cdcdcd 75%);background-size:12px 12px;background-position:0 0,6px 6px"></div>
<div style="left:1705px;top:657px;width:22px;height:22px;background:#ffffff;border:1px solid #222"></div>
<span class="t" style="left:1731px;top:658px;font-size:13px;color:#c8c8c8;height:16px;width:56px;overflow:hidden;-webkit-mask-image:linear-gradient(90deg,#000 85%,transparent)">100 % Normal</span>
<span class="t" style="left:1731px;top:673px;font-size:13px;color:#c8c8c8;">Layer 9</span>
<div style="left:1644px;top:690px;width:190px;height:1px;background:#161616;"></div>
<div style="left:1562px;top:702px;width:14px;height:14px;background:transparent;border:1.5px solid #1c1c1c;border-radius:3px"></div>
<div style="left:1587px;top:702px;width:14px;height:14px;background:transparent;border:1.5px solid #1c1c1c;border-radius:3px"></div>
<div style="left:1609px;top:696px;width:5px;height:28px;background:#5c8a9c;border-radius:2px"></div>
<div style="left:1656px;top:697px;width:33px;height:25px;background:#1b1b1b;"></div>
<div style="left:1657px;top:698px;width:31px;height:3px;background:#5a5a5a;"></div>
<div style="left:1657px;top:718px;width:31px;height:3px;background:#5a5a5a;"></div>
<div style="left:1657px;top:701px;width:31px;height:17px;background:#f0b8f0;"></div>
<span class="t" style="left:1699px;top:696px;font-size:13px;color:#c8c8c8;">100 % Normal</span>
<span class="t" style="left:1699px;top:711px;font-size:13px;color:#c8c8c8;">Layer 10</span>
<div style="left:1644px;top:728px;width:190px;height:1px;background:#161616;"></div>
<div style="left:1562px;top:740px;width:14px;height:14px;background:transparent;border:1.5px solid #1c1c1c;border-radius:3px"></div>
<div style="left:1587px;top:740px;width:14px;height:14px;background:transparent;border:1.5px solid #1c1c1c;border-radius:3px"></div>
<div style="left:1609px;top:734px;width:5px;height:28px;background:#5c8a9c;border-radius:2px"></div>
<div style="left:1656px;top:735px;width:33px;height:25px;background:#1b1b1b;"></div>
<div style="left:1657px;top:736px;width:31px;height:3px;background:#5a5a5a;"></div>
<div style="left:1657px;top:756px;width:31px;height:3px;background:#5a5a5a;"></div>
<div style="left:1657px;top:739px;width:31px;height:17px;background:#e8b0e8;"></div>
<div style="left:1705px;top:733px;width:22px;height:22px;background:#ffffff;border:1px solid #222"></div>
<span class="t" style="left:1731px;top:734px;font-size:13px;color:#c8c8c8;height:16px;width:56px;overflow:hidden;-webkit-mask-image:linear-gradient(90deg,#000 85%,transparent)">100 % Normal</span>
<span class="t" style="left:1731px;top:749px;font-size:13px;color:#c8c8c8;transform:scaleX(0.72);transform-origin:0 0;height:16px;width:131px;overflow:hidden;-webkit-mask-image:linear-gradient(90deg,#000 75%,transparent)">game_2026-01-16_11</span>
<div style="left:1644px;top:766px;width:190px;height:1px;background:#161616;"></div>
<div style="left:1562px;top:778px;width:14px;height:14px;background:transparent;border:1.5px solid #1c1c1c;border-radius:3px"></div>
<div style="left:1587px;top:778px;width:14px;height:14px;background:transparent;border:1.5px solid #1c1c1c;border-radius:3px"></div>
<div style="left:1609px;top:772px;width:5px;height:28px;background:#5c8a9c;border-radius:2px"></div>
<div style="left:1656px;top:773px;width:33px;height:25px;background:#1b1b1b;"></div>
<div style="left:1657px;top:774px;width:31px;height:3px;background:#5a5a5a;"></div>
<div style="left:1657px;top:794px;width:31px;height:3px;background:#5a5a5a;"></div>
<div style="left:1657px;top:777px;width:31px;height:17px;background:#f0b0f0;"></div>
<span class="t" style="left:1699px;top:772px;font-size:13px;color:#c8c8c8;">100 % Normal</span>
<span class="t" style="left:1699px;top:787px;font-size:13px;color:#c8c8c8;">Layer 8</span>
<div style="left:1644px;top:804px;width:190px;height:1px;background:#161616;"></div>
<div style="left:1562px;top:816px;width:14px;height:14px;background:transparent;border:1.5px solid #1c1c1c;border-radius:3px"></div>
<div style="left:1587px;top:816px;width:14px;height:14px;background:transparent;border:1.5px solid #1c1c1c;border-radius:3px"></div>
<div style="left:1609px;top:810px;width:5px;height:28px;background:#5c8a9c;border-radius:2px"></div>
<div style="left:1656px;top:811px;width:33px;height:25px;background:#1b1b1b;"></div>
<div style="left:1657px;top:812px;width:31px;height:3px;background:#5a5a5a;"></div>
<div style="left:1657px;top:832px;width:31px;height:3px;background:#5a5a5a;"></div>
<div style="left:1657px;top:815px;width:31px;height:17px;background:#b02020;"></div>
<div style="left:1705px;top:809px;width:22px;height:22px;background:#ffffff;border:1px solid #222"></div>
<span class="t" style="left:1731px;top:810px;font-size:13px;color:#c8c8c8;height:16px;width:56px;overflow:hidden;-webkit-mask-image:linear-gradient(90deg,#000 85%,transparent)">100 % Normal</span>
<span class="t" style="left:1731px;top:825px;font-size:13px;color:#c8c8c8;transform:scaleX(0.72);transform-origin:0 0;height:16px;width:131px;overflow:hidden;-webkit-mask-image:linear-gradient(90deg,#000 75%,transparent)">firefox_2026-01-13_11</span>
<div style="left:1644px;top:842px;width:190px;height:1px;background:#161616;"></div>
<div style="left:1562px;top:854px;width:14px;height:14px;background:transparent;border:1.5px solid #1c1c1c;border-radius:3px"></div>
<div style="left:1587px;top:854px;width:14px;height:14px;background:transparent;border:1.5px solid #1c1c1c;border-radius:3px"></div>
<div style="left:1609px;top:848px;width:5px;height:28px;background:#5c8a9c;border-radius:2px"></div>
<div style="left:1656px;top:849px;width:33px;height:25px;background:#1b1b1b;"></div>
<div style="left:1657px;top:850px;width:31px;height:3px;background:#5a5a5a;"></div>
<div style="left:1657px;top:870px;width:31px;height:3px;background:#5a5a5a;"></div>
<div style="left:1657px;top:853px;width:31px;height:17px;background-color:#fff;background-image:linear-gradient(45deg,#cdcdcd 25%,transparent 25%,transparent 75%,#cdcdcd 75%),linear-gradient(45deg,#cdcdcd 25%,transparent 25%,transparent 75%,#cdcdcd 75%);background-size:12px 12px;background-position:0 0,6px 6px"></div>
<span class="t" style="left:1699px;top:848px;font-size:13px;color:#c8c8c8;">100 % Normal</span>
<span class="t" style="left:1699px;top:863px;font-size:13px;color:#c8c8c8;">Layer 6</span>
<div style="left:1644px;top:880px;width:190px;height:1px;background:#161616;"></div>
<div style="left:1562px;top:892px;width:14px;height:14px;background:transparent;border:1.5px solid #1c1c1c;border-radius:3px"></div>
<div style="left:1587px;top:892px;width:14px;height:14px;background:transparent;border:1.5px solid #1c1c1c;border-radius:3px"></div>
<div style="left:1609px;top:886px;width:5px;height:28px;background:#5c8a9c;border-radius:2px"></div>
<div style="left:1656px;top:887px;width:33px;height:25px;background:#1b1b1b;"></div>
<div style="left:1657px;top:888px;width:31px;height:3px;background:#5a5a5a;"></div>
<div style="left:1657px;top:908px;width:31px;height:3px;background:#5a5a5a;"></div>
<div style="left:1657px;top:891px;width:31px;height:17px;background-color:#fff;background-image:linear-gradient(45deg,#cdcdcd 25%,transparent 25%,transparent 75%,#cdcdcd 75%),linear-gradient(45deg,#cdcdcd 25%,transparent 25%,transparent 75%,#cdcdcd 75%);background-size:12px 12px;background-position:0 0,6px 6px"></div>
<span class="t" style="left:1699px;top:886px;font-size:13px;color:#c8c8c8;">100 % Normal</span>
<span class="t" style="left:1699px;top:901px;font-size:13px;color:#c8c8c8;">Layer 5</span>
<div style="left:1644px;top:918px;width:190px;height:1px;background:#161616;"></div>
<div style="left:1562px;top:930px;width:14px;height:14px;background:transparent;border:1.5px solid #1c1c1c;border-radius:3px"></div>
<div style="left:1587px;top:930px;width:14px;height:14px;background:transparent;border:1.5px solid #1c1c1c;border-radius:3px"></div>
<div style="left:1609px;top:924px;width:5px;height:28px;background:#5c8a9c;border-radius:2px"></div>
<div style="left:1656px;top:925px;width:33px;height:25px;background:#1b1b1b;"></div>
<div style="left:1657px;top:926px;width:31px;height:3px;background:#5a5a5a;"></div>
<div style="left:1657px;top:946px;width:31px;height:3px;background:#5a5a5a;"></div>
<div style="left:1657px;top:929px;width:31px;height:17px;background-color:#fff;background-image:linear-gradient(45deg,#cdcdcd 25%,transparent 25%,transparent 75%,#cdcdcd 75%),linear-gradient(45deg,#cdcdcd 25%,transparent 25%,transparent 75%,#cdcdcd 75%);background-size:12px 12px;background-position:0 0,6px 6px"></div>
<span class="t" style="left:1699px;top:924px;font-size:13px;color:#c8c8c8;">100 % Normal</span>
<span class="t" style="left:1699px;top:939px;font-size:13px;color:#c8c8c8;">Layer 4</span>
<div style="left:1644px;top:956px;width:190px;height:1px;background:#161616;"></div>
<div style="left:1562px;top:968px;width:14px;height:14px;background:transparent;border:1.5px solid #1c1c1c;border-radius:3px"></div>
<div style="left:1587px;top:968px;width:14px;height:14px;background:transparent;border:1.5px solid #1c1c1c;border-radius:3px"></div>
<div style="left:1609px;top:962px;width:5px;height:28px;background:#5c8a9c;border-radius:2px"></div>
<div style="left:1656px;top:963px;width:33px;height:25px;background:#1b1b1b;"></div>
<div style="left:1657px;top:964px;width:31px;height:3px;background:#5a5a5a;"></div>
<div style="left:1657px;top:984px;width:31px;height:3px;background:#5a5a5a;"></div>
<div style="left:1657px;top:967px;width:31px;height:17px;background-color:#fff;background-image:linear-gradient(45deg,#cdcdcd 25%,transparent 25%,transparent 75%,#cdcdcd 75%),linear-gradient(45deg,#cdcdcd 25%,transparent 25%,transparent 75%,#cdcdcd 75%);background-size:12px 12px;background-position:0 0,6px 6px"></div>
<span class="t" style="left:1699px;top:962px;font-size:13px;color:#c8c8c8;">100 % Normal</span>
<span class="t" style="left:1699px;top:977px;font-size:13px;color:#c8c8c8;">Layer 2</span>
<div style="left:1644px;top:994px;width:190px;height:1px;background:#161616;"></div>
<div style="left:1562px;top:1006px;width:14px;height:14px;background:transparent;border:1.5px solid #1c1c1c;border-radius:3px"></div>
<div style="left:1587px;top:1006px;width:14px;height:14px;background:transparent;border:1.5px solid #1c1c1c;border-radius:3px"></div>
<div style="left:1609px;top:1000px;width:5px;height:28px;background:#5c8a9c;border-radius:2px"></div>
<div style="left:1656px;top:1001px;width:33px;height:25px;background:#1b1b1b;"></div>
<div style="left:1657px;top:1002px;width:31px;height:3px;background:#5a5a5a;"></div>
<div style="left:1657px;top:1022px;width:31px;height:3px;background:#5a5a5a;"></div>
<div style="left:1657px;top:1005px;width:31px;height:17px;background-color:#fff;background-image:linear-gradient(45deg,#cdcdcd 25%,transparent 25%,transparent 75%,#cdcdcd 75%),linear-gradient(45deg,#cdcdcd 25%,transparent 25%,transparent 75%,#cdcdcd 75%);background-size:12px 12px;background-position:0 0,6px 6px"></div>
<span class="t" style="left:1699px;top:1000px;font-size:13px;color:#c8c8c8;">100 % Normal</span>
<span class="t" style="left:1699px;top:1015px;font-size:13px;color:#c8c8c8;">Layer 3</span>
<div style="left:1557px;top:1032px;width:277px;height:1px;background:#161616;"></div>
<div style="left:1587px;top:1044px;width:14px;height:14px;background:transparent;border:1.5px solid #1c1c1c;border-radius:3px"></div>
<div style="left:1609px;top:1038px;width:5px;height:28px;background:#8fd3ff;border-radius:2px"></div>
<span class="t" style="left:1668px;top:1038px;font-size:13px;color:#c8c8c8;">100 % Normal</span>
<span class="t" style="left:1668px;top:1053px;font-size:13px;color:#c8c8c8;">BACK</span>
<div style="left:1625px;top:1070px;width:209px;height:1px;background:#161616;"></div>
<div style="left:1609px;top:1075px;width:5px;height:4px;background:#8fd3ff;border-radius:2px 2px 0 0"></div><svg style="left:0;top:0;pointer-events:none" width="1850" height="1079" viewBox="0 0 1850 1079"><path d="M1787 21.5h13" stroke="#c8c8c8" stroke-width="1.3"/><rect x="1810.5" y="9.5" width="12" height="12" rx="2" fill="none" stroke="#c8c8c8" stroke-width="1.2"/><path d="M1833 10l11 11M1844 10l-11 11" stroke="#c8c8c8" stroke-width="1.2"/>
<path d="M9 67.5l-5 5 5 5M14 67.5l-5 5 5 5M58 67.5l-5 5 5 5M63 67.5l-5 5 5 5M90.5 67.5l-5 5 5 5" fill="none" stroke="#8c8c8c" stroke-width="1.1"/>
<path d="M8 93.5h9M8 97.5h9M8 101.5h9" stroke="#777" stroke-width="1"/>
<defs><clipPath id="cpT"><rect x="24" y="89" width="24" height="25"/></clipPath></defs><g clip-path="url(#cpT)"><path d="M49 92L36.5 105" stroke="#b4b4b4" stroke-width="3.6" stroke-linecap="round"/><path d="M33 110l1.5-4.5 3 3z" fill="#b4b4b4"/></g>
<g fill="none" stroke="#b4b4b4" stroke-width="1.2" stroke-linecap="round" stroke-linejoin="round">
<path d="M13 142l3-10 12-9 5 5-9 12z"/><path d="M14 141l9-9" stroke-width="2"/>
<path d="M13 142l11-11"/>
<ellipse cx="24" cy="190" rx="11" ry="8.5"/><path d="M19 197l-5 6 9-4"/>
<path d="M19 229c-7-4-8-12 0-16 6-3 14-1 15 5"/><path d="M34 222l-3 5M29 229l-4 1" stroke-dasharray="1.5 2"/>
<path d="M25 230c-3-3-7-3-6 0 1 3 4 3 5 1-2 3-6 4-11 4"/>
<path d="M13 266l22-23"/>
<path d="M20 297h13"/><path d="M14 288l5-5 9 9-5 5h-3z"/>
<path d="M6 302.5h38" stroke="#6a6a6a" stroke-width="1"/>
<path d="M13 331l9-9"/>
<path d="M6 367.5h38" stroke="#6a6a6a" stroke-width="1"/>
<path d="M21 374l7 4v8l-7 4-7-4v-8z"/><path d="M14 378l7 4 7-4M21 382v8" stroke-width="0.8"/>
<path d="M15 427l0-21 21 0z"/>
<path d="M15 436v20M19 438.5h15"/>
<path d="M14 519l3-8 13-12 4 4-12 13z"/>
</g>
<g fill="#b4b4b4">
<path d="M25 122l4-4 7 7-4 4z"/>
<path d="M26 305l1.8 6.5 6.2-3-4 5.6 5.5 3.4-6.5.2 .6 6.8-3.6-5.6-4 5.5 .8-6.7-6.3-.8 5.8-3-3.8-5.7 6.2 2.8z"/>
<path d="M15 284l10-10 10 10-10 10z" />
<path d="M29 376l9 9-4 1 3 5-2 1-3-5-3 3z"/>
<path d="M15 427v-21h21z M19 420v-10h10z" fill-rule="evenodd"/>
<rect x="12" y="435" width="7" height="7" rx="1"/>
<path d="M20 443l15 7-7 1-3 7z"/>
<path d="M14 478c-1-2 1-4 3-2l3 3v-9c0-2 3-2 3 0v6-8c0-2 3-2 3 0v8-7c0-2 3-2 3 0v9l2-4c1-2 3-1 3 1l-3 9c-1 3-3 5-7 5h-3c-3 0-5-3-7-5z"/>
<path d="M28 505l6-6c2-2 4 0 2 2l-6 6 1 2-2 1-5-5 1-2z"/>
</g>
<defs><linearGradient id="gr1" x1="0" y1="1" x2="1" y2="0"><stop offset="0.1" stop-color="#b0b0b0"/><stop offset="0.9" stop-color="#1c1c1c"/></linearGradient></defs><rect x="14.5" y="152.5" width="20" height="20" rx="2" fill="url(#gr1)" stroke="#b4b4b4" stroke-width="1.2"/>
<g transform="translate(24.5 351) scale(1.0)"><path d="M0 -11L12 1L2 11L-7.5 2L-7.5 6C-7.5 9 -11 9 -11 6L-11 0C-11 -1.5 -10.5 -2 -9.5 -2.5Z" fill="#b4b4b4" stroke="#b4b4b4" stroke-width="0.8" stroke-linejoin="round"/><path d="M0 -8.2L5.8 -3L-5.8 -3Z" fill="#424e63"/></g>
<path d="M57 93.5h9M57 97.5h9M57 101.5h9" stroke="#777" stroke-width="1"/>
<path d="M98.5 94.5L86 107" stroke="#b4b4b4" stroke-width="3.6" stroke-linecap="round"/><path d="M83 111l1.5-4.5 3 3z" fill="#b4b4b4"/><g fill="none" stroke="#b4b4b4" stroke-width="1.1"><path d="M91.5 103v8h8M91.5 107h8M93 103h6"/></g><g fill="#b4b4b4"><circle cx="99.5" cy="103" r="1.5"/><circle cx="99.5" cy="107" r="1.5"/><circle cx="99.5" cy="111" r="1.5"/></g>
<g transform="translate(67 131) scale(0.95)"><path d="M0 -11L12 1L2 11L-7.5 2L-7.5 6C-7.5 9 -11 9 -11 6L-11 0C-11 -1.5 -10.5 -2 -9.5 -2.5Z" fill="#b4b4b4" stroke="#b4b4b4" stroke-width="0.8" stroke-linejoin="round"/><path d="M0 -8.2L5.8 -3L-5.8 -3Z" fill="#4a5570"/></g>
<g transform="translate(68 167) scale(0.95)"><path d="M0 -11L12 1L2 11L-7.5 2L-7.5 6C-7.5 9 -11 9 -11 6L-11 0C-11 -1.5 -10.5 -2 -9.5 -2.5Z" fill="#b4b4b4" stroke="#b4b4b4" stroke-width="0.8" stroke-linejoin="round"/><path d="M0 -8.2L5.8 -3L-5.8 -3Z" fill="#424e63"/></g>
<g transform="translate(68 212) scale(0.95)"><path d="M0 -11L12 1L2 11L-7.5 2L-7.5 6C-7.5 9 -11 9 -11 6L-11 0C-11 -1.5 -10.5 -2 -9.5 -2.5Z" fill="#b4b4b4" stroke="#b4b4b4" stroke-width="0.8" stroke-linejoin="round"/><path d="M0 -8.2L5.8 -3L-5.8 -3Z" fill="#222222"/></g>
<g fill="none" stroke="#b4b4b4" stroke-width="1.1"><path d="M62 263C57 260 56 254 58.5 250C61 246 65 245 69 245C75 245 79.5 249 79.5 254C79.5 260 74 264 67.5 264"/><path d="M67.5 264C66 261 62 261 62.5 263.5C63 265.5 66 266 67 264.5C66 267.5 61 269 56 269"/></g><path d="M64.5 250h11l-3 7h-11z" fill="#b4b4b4"/>
<g fill="none" stroke="#b4b4b4" stroke-width="1.1"><path d="M62 308C57 305 56 299 58.5 295C61 291 65 290 69 290C75 290 79.5 294 79.5 299C79.5 305 74 309 67.5 309"/><path d="M67.5 309C66 306 62 306 62.5 308.5C63 310.5 66 311 67 309.5C66 312.5 61 314 56 314"/></g><ellipse cx="69" cy="299.5" rx="9" ry="8" fill="#6a6a6a"/>
<path d="M58 355l0-17 6 0-6 17zM58 355h20v-12z" fill="#5a5a5a"/><path d="M61 354l8-12 3 3z" fill="#333"/><path d="M66 345l8-8 3 3-8 8z" fill="#dcdcdc"/><path d="M73 338l2-2 3 3-2 2z" fill="#333"/>
<path d="M82 347c12-5 25-6 40-1s30 6 45 2 20-8 28-12" fill="none" stroke="#fff" stroke-width="13" stroke-linecap="round"/>
<circle cx="116" cy="411.5" r="7" fill="#b4b4b4"/><path d="M116 407v9M111.5 411.5h9" stroke="#222" stroke-width="2.2"/>
<g fill="none" stroke="#b4b4b4" stroke-width="1.1" stroke-linejoin="round">
<rect x="201.5" y="482.5" width="15" height="15" rx="2"/><path d="M209 484v9M205.5 489.5l3.5 3.5 3.5-3.5"/>
<rect x="226.5" y="481.5" width="12" height="12" rx="2"/><rect x="229.5" y="484.5" width="12" height="13" rx="2" fill="#333"/><path d="M235.5 488v6M232.5 491h6"/>
<path d="M253 484h13M255 484v13h9v-13M257.5 487v8M259.5 487v8M261.5 487v8M257 484v-2h5v2"/>
</g>
<path d="M57 511.5h9M57 515.5h9M57 519.5h9" stroke="#777" stroke-width="1"/>
<g stroke="#b4b4b4" stroke-width="1.3"><path d="M82 515h19M82 521h19"/></g><circle cx="88" cy="515" r="2.5" fill="#b4b4b4"/><circle cx="94" cy="521" r="2.5" fill="#b4b4b4"/>
<path d="M251.5 566v-3.5a3 3 0 0 1 6 0" fill="none" stroke="#b4b4b4" stroke-width="1.3"/><rect x="252" y="565" width="10.5" height="8" rx="1.5" fill="#b4b4b4"/>
<path d="M259.5 593l3.5-3.5 3.5 3.5M259.5 755l3.5 3.5 3.5-3.5" fill="none" stroke="#b4b4b4" stroke-width="1"/>
<path d="M74 597l3.5 4 7-9" fill="none" stroke="#d8d8d8" stroke-width="1.8"/>
<path d="M74 626l3.5 4 7-9" fill="none" stroke="#d8d8d8" stroke-width="1.8"/>
<path d="M240 621l4.5 4.5-4.5 4.5" fill="none" stroke="#b4b4b4" stroke-width="1"/>
<path d="M100 669.5h60.5v-2" fill="none" stroke="#777" stroke-width="1"/>
<path d="M220 656l4-4 4 4M220 661l4 4 4-4" fill="none" stroke="#b4b4b4" stroke-width="1"/>
<path d="M58 693h8M62 689v8" stroke="#b4b4b4" stroke-width="1.1"/>
<path d="M74 686l3.5 4 7-9" fill="none" stroke="#d8d8d8" stroke-width="1.8"/>
<path d="M137 706.5h23.5v-2" fill="none" stroke="#777" stroke-width="1"/>
<path d="M220 690l4-4 4 4M220 696l4 4 4-4" fill="none" stroke="#b4b4b4" stroke-width="1"/>
<path d="M58 729h8" stroke="#b4b4b4" stroke-width="1.1"/>
<path d="M74 729l3.5 4 7-9" fill="none" stroke="#d8d8d8" stroke-width="1.8"/>
<g fill="none" stroke="#b4b4b4" stroke-width="1.1" stroke-linejoin="round">
<path d="M145 724l8.5-5 8.5 5-8.5 5zM145 728.5l8.5 5 8.5-5M145 733l8.5 5 8.5-5"/>
<rect x="194" y="720" width="17" height="17" rx="2"/><path d="M197.5 728l3.5 3.5 7-8"/><path d="M194.5 735l3-3"/>
<path d="M238 727l5.5 5.5 5.5-5.5"/>
</g>
<path d="M215.5 736v-15a1 1 0 0 1 1-1h5l2 2h8.5a1 1 0 0 1 1 1v13z" fill="#b4b4b4"/>
<path d="M174.5 738h6l-1.2-9h-3.6z" fill="#b4b4b4"/><rect x="175.5" y="722" width="4" height="4" fill="none" stroke="#b4b4b4" stroke-width="1"/><path d="M169.5 721l6 2.5M185.5 721l-6 2.5M170.5 729l5-2M184.5 729l-5-2" stroke="#b4b4b4" stroke-width="1"/>
<defs><clipPath id="cp2"><rect x="50" y="744" width="206" height="20"/></clipPath></defs><g clip-path="url(#cp2)"><g fill="none" stroke="#b4b4b4" stroke-width="1.2">
<rect x="159.5" y="754.5" width="16.5" height="14" rx="2"/><path d="M162.5 763l2.5 2.5"/><path d="M163 762l3.5 3.5 6-6"/>
<rect x="187.5" y="754.5" width="13" height="14" rx="2"/>
<path d="M237.5 761l5.5 5.5 5.5-5.5"/>
<path d="M215.5 763v-3a4 4 0 0 1 8 0v3"/>
</g>
<path d="M136 764l4-9h2.5l4 9h-3l-2-5-2 5z" fill="#b4b4b4"/>
<path d="M106 757h8v5l-2 3h-4l-2-3z" fill="#c8c8d8"/><path d="M108 761l2 2 2-2-1-2-1 1-1-1z" fill="#6a7fb0"/>
<rect x="214" y="762" width="11" height="4" fill="#b4b4b4"/></g>

<path d="M61.5 736v27.5h8" fill="none" stroke="#111" stroke-width="1"/>
<g fill="none" stroke="#b4b4b4" stroke-width="1.2">
<path d="M229.5 771.3A8.3 8.3 0 1 0 234.5 769"/><path d="M227 774l0.5-0.8M228.5 771.5l.6-.6M231.5 769.5l.8-.3" stroke-width="1.3"/>
<path d="M234.5 769v8"/>
</g><circle cx="234.5" cy="777" r="2.2" fill="#b4b4b4"/>
<path d="M253.5 771.5a5.5 5.5 0 0 0 6.5 7l7 7a1.8 1.8 0 0 0 2.5-2.5l-7-7a5.5 5.5 0 0 0-7-6.5l3.2 3.2-.8 2.5-2.5.8z" fill="none" stroke="#b4b4b4" stroke-width="1.3" stroke-linejoin="round"/>

<path d="M57 799.5h9M57 803.5h9M57 807.5h9" stroke="#777" stroke-width="1"/>
<path d="M260.5 803l3.5 3.5 3.5-3.5" fill="none" stroke="#b4b4b4" stroke-width="1"/>
<defs><clipPath id="cpP"><rect x="73" y="795" width="183" height="18"/></clipPath></defs>
<g clip-path="url(#cpP)">
<circle cx="91" cy="806.5" r="8.5" fill="none" stroke="#8a8a8a" stroke-width="1.2"/><rect x="87" y="804" width="9" height="9" rx="2" fill="#7a7a7a"/>
<rect x="158.5" y="799.5" width="18" height="4.5" rx="2" fill="none" stroke="#7a7a7a" stroke-width="1"/><rect x="158.5" y="806.5" width="18" height="4.5" rx="2" fill="none" stroke="#7a7a7a" stroke-width="1"/>
<path d="M162 803l2-2.5 2 2.5zM162 810l2-2.5 2 2.5z" fill="#9a9a9a"/><rect x="158.5" y="812" width="18" height="3" fill="#7a7a7a"/>
<path d="M196 815c0-5 2-8 4-12l3 5 3-5c2 4 4 7 4 12z" fill="#6a6a6a"/>
<rect x="234.5" y="799.5" width="18" height="15" rx="2" fill="#7a7a7a"/><rect x="238" y="801" width="11" height="5" fill="#555"/><rect x="238" y="808" width="11" height="5" fill="#555"/>
<g fill="#333"><rect x="235.5" y="801" width="2" height="2"/><rect x="235.5" y="805" width="2" height="2"/><rect x="235.5" y="809" width="2" height="2"/><rect x="249.5" y="801" width="2" height="2"/><rect x="249.5" y="805" width="2" height="2"/><rect x="249.5" y="809" width="2" height="2"/></g>
</g>
<rect x="120.5" y="799.5" width="17" height="17" rx="3" fill="#a8a8a8" stroke="#c8c8c8"/>
<path d="M121.5 800.5h5.5v5.5h-5.5zM131.5 810.5h5.5v5.5h-5.5z" fill="#333"/><path d="M127 806h5v5h-5z" fill="#444"/><path d="M128 807h3v3h-3z" fill="#fff"/>
<path d="M127 800.5h4.5v5.5h-4.5zM121.5 806h5.5v4.5h-5.5z" fill="#c0c0c0"/><path d="M131.5 806h5.5v4.5h-5.5zM127 811h4.5v5h-4.5z" fill="#8a8a8a"/>

<path d="M207.5 829.5l4.5 4.5 4.5-4.5" fill="none" stroke="#b4b4b4" stroke-width="1.1"/>
<path d="M227.5 826.5a5.5 5.5 0 0 0 6.5 7l7 7a1.8 1.8 0 0 0 2.5-2.5l-7-7a5.5 5.5 0 0 0-7-6.5l3.2 3.2-.8 2.5-2.5.8z" fill="none" stroke="#b4b4b4" stroke-width="1.3" stroke-linejoin="round"/><g fill="none" stroke="#b4b4b4" stroke-width="1.2">
<rect x="251.5" y="826.5" width="16" height="15" rx="2"/><path d="M259.5 828v9M256 834l3.5 3.5 3.5-3.5"/></g>
<g fill="none" stroke="#6a6a6a" stroke-width="1.1"><path d="M205 1060v-3h5l3 3v13h-12v-10"/><path d="M208 1063v7M205.5 1067.5l2.5 2.5 2.5-2.5"/>
<path d="M253 1059h13M255 1059v15h9v-15M257.5 1062v9M259.5 1062v9M261.5 1062v9"/></g>
<g fill="none" stroke="#b4b4b4" stroke-width="1.1"><path d="M233 1057c-3 5-6 8-6 11a6 6 0 0 0 9 5"/><path d="M233 1057c3 5 6 8 6 10"/></g>
<circle cx="240" cy="1072" r="4.5" fill="#b4b4b4"/><path d="M237.5 1072h5M240 1069.5v5" stroke="#333" stroke-width="1.2"/>
<g stroke="#c8c8c8" stroke-width="1.9" stroke-linecap="round"><path d="M295.63 77.01L299.53 77.90"/><path d="M294.32 79.74L297.44 82.23"/><path d="M291.95 81.63L293.69 85.23"/><path d="M289.00 82.30L289.00 86.30"/><path d="M286.05 81.63L284.31 85.23"/><path d="M283.68 79.74L280.56 82.23"/><path d="M282.37 77.01L278.47 77.90"/><path d="M282.37 73.99L278.47 73.10"/><path d="M283.68 71.26L280.56 68.77"/><path d="M286.05 69.37L284.31 65.77"/><path d="M289.00 68.70L289.00 64.70"/><path d="M291.95 69.37L293.69 65.77"/><path d="M294.32 71.26L297.44 68.77"/><path d="M295.63 73.99L299.53 73.10"/></g>
<rect x="309.5" y="66.5" width="14.5" height="14.5" fill="#3a3a3a" stroke="#8a8a8a" stroke-width="1" stroke-dasharray="2 1.6"/><g stroke="#6a6a6a" stroke-width="1.6" stroke-linecap="round"><path d="M325.51 70.54L327.81 68.61"/><path d="M327.37 74.52L330.33 74.00"/><path d="M326.99 78.91L329.81 79.93"/><path d="M324.46 82.51L326.39 84.81"/><path d="M320.48 84.37L321.00 87.33"/><path d="M316.09 83.99L315.07 86.81"/></g>
<g transform="translate(349.5 76) scale(1.0)"><path d="M0 -11L12 1L2 11L-7.5 2L-7.5 6C-7.5 9 -11 9 -11 6L-11 0C-11 -1.5 -10.5 -2 -9.5 -2.5Z" fill="#b8b8b8" stroke="#b8b8b8" stroke-width="0.8" stroke-linejoin="round"/><path d="M0 -8.2L5.8 -3L-5.8 -3Z" fill="#333"/></g>
<g fill="none" stroke="#b4b4b4" stroke-width="1.3"><rect x="370.5" y="70" width="17" height="16.5"/><path d="M379 70v-4"/></g>
<g fill="#b4b4b4"><circle cx="370.5" cy="70" r="1.8"/><circle cx="387.5" cy="70" r="1.8"/><circle cx="370.5" cy="86.5" r="1.8"/><circle cx="387.5" cy="86.5" r="1.8"/><circle cx="379" cy="86.5" r="1.8"/><circle cx="370.5" cy="78" r="1.8"/><circle cx="387.5" cy="78" r="1.8"/><circle cx="379" cy="65" r="2.2"/><circle cx="379" cy="70" r="1.5"/></g>
<path d="M399.5 62v29M499.5 62v29" stroke="#4a4a4a" stroke-width="1"/>
<g fill="none" stroke="#6e6e6e" stroke-width="1" stroke-dasharray="2 1.5"><rect x="409.5" y="66.5" width="20" height="19"/><rect x="439.5" y="66.5" width="19" height="19"/></g>
<path d="M409 66l21 21" stroke="#6e6e6e" stroke-width="1.2"/>
<path d="M459 70v16h-16z" fill="#6e6e6e"/>
<rect x="469.5" y="66.5" width="19" height="19" rx="2" fill="none" stroke="#6e6e6e" stroke-width="1"/>
<rect x="472.5" y="69.5" width="13" height="13" rx="2" fill="none" stroke="#6e6e6e" stroke-width="1.3" stroke-dasharray="1.5 1.8"/>

<g fill="none" stroke="#d0d0d0" stroke-width="1.3"><path d="M509 67.5V85.5H520"/><path d="M509 67.5L518 76.5" /><path d="M518 76.5L527 85.5H520" stroke-width="0.8" stroke="#9aa"/><path d="M538 76.5H549M538 76.5A10.7 10.7 0 0 0 549 87"/><path d="M549 76.5H559.5A10.7 10.7 0 0 1 549 87" stroke-width="0.8" stroke="#9aa"/></g><g stroke="#777" stroke-width="0.8"><path d="M567 76.5H590M567 84.5H590M572 68V88M583.5 68V88"/></g><path d="M572 76.5V84.5H590M572 76.5H580" fill="none" stroke="#c8c8c8" stroke-width="1.3"/><path d="M521 74L530.5 64.5" stroke="#c8c8c8" stroke-width="2.6" stroke-linecap="round"/><path d="M519 76l3.5 -0.5 -3 -3z" fill="#c8c8c8"/><path d="M551.5 74L560.5 64.5" stroke="#c8c8c8" stroke-width="2.6" stroke-linecap="round"/><path d="M549.5 76l3.5 -0.5 -3 -3z" fill="#c8c8c8"/><path d="M581.5 74L590.5 64.5" stroke="#c8c8c8" stroke-width="2.6" stroke-linecap="round"/><path d="M579.5 76l3.5 -0.5 -3 -3z" fill="#c8c8c8"/>
<path d="M297.5 101.5l9 9M306.5 101.5l-9 9M423.5 101.5l9 9M432.5 101.5l-9 9" stroke="#c8c8c8" stroke-width="1.2"/>
<path d="M443.5 103l4 4 4-4" fill="none" stroke="#9a9a9a" stroke-width="1"/>
<rect x="304.0" y="151.0" width="2" height="2.2" fill="#38b764"/><rect x="308.3" y="151.0" width="2" height="2.2" fill="#a7f070"/><rect x="312.6" y="151.0" width="2" height="2.2" fill="#c87c2a"/><rect x="316.9" y="151.0" width="2" height="2.2" fill="#d04648"/><rect x="321.2" y="151.0" width="2" height="2.2" fill="#ef7d57"/><rect x="325.5" y="151.0" width="2" height="2.2" fill="#b13e53"/><rect x="329.8" y="151.0" width="2" height="2.2" fill="#d04648"/><rect x="304.0" y="155.1" width="2" height="2.2" fill="#3b5dc9"/><rect x="308.3" y="155.1" width="2" height="2.2" fill="#38b764"/><rect x="312.6" y="155.1" width="2" height="2.2" fill="#38b764"/><rect x="316.9" y="155.1" width="2" height="2.2" fill="#d04648"/><rect x="321.2" y="155.1" width="2" height="2.2" fill="#d04648"/><rect x="325.5" y="155.1" width="2" height="2.2" fill="#5d275d"/><rect x="329.8" y="155.1" width="2" height="2.2" fill="#a7f070"/><rect x="304.0" y="159.2" width="2" height="2.2" fill="#38b764"/><rect x="308.3" y="159.2" width="2" height="2.2" fill="#a7f070"/><rect x="312.6" y="159.2" width="2" height="2.2" fill="#5d275d"/><rect x="316.9" y="159.2" width="2" height="2.2" fill="#b13e53"/><rect x="321.2" y="159.2" width="2" height="2.2" fill="#ef7d57"/><rect x="325.5" y="159.2" width="2" height="2.2" fill="#a7f070"/><rect x="329.8" y="159.2" width="2" height="2.2" fill="#b13e53"/><rect x="304.0" y="163.3" width="2" height="2.2" fill="#3b5dc9"/><rect x="308.3" y="163.3" width="2" height="2.2" fill="#b13e53"/><rect x="312.6" y="163.3" width="2" height="2.2" fill="#3b5dc9"/><rect x="316.9" y="163.3" width="2" height="2.2" fill="#d04648"/><rect x="321.2" y="163.3" width="2" height="2.2" fill="#5d275d"/><rect x="325.5" y="163.3" width="2" height="2.2" fill="#5d275d"/><rect x="329.8" y="163.3" width="2" height="2.2" fill="#5d275d"/><rect x="304.0" y="167.4" width="2" height="2.2" fill="#d04648"/><rect x="308.3" y="167.4" width="2" height="2.2" fill="#a7f070"/><rect x="312.6" y="167.4" width="2" height="2.2" fill="#c87c2a"/><rect x="316.9" y="167.4" width="2" height="2.2" fill="#ef7d57"/><rect x="321.2" y="167.4" width="2" height="2.2" fill="#b13e53"/><rect x="325.5" y="167.4" width="2" height="2.2" fill="#a7f070"/><rect x="329.8" y="167.4" width="2" height="2.2" fill="#d04648"/><rect x="304.0" y="171.5" width="2" height="2.2" fill="#38b764"/><rect x="308.3" y="171.5" width="2" height="2.2" fill="#3b5dc9"/><rect x="312.6" y="171.5" width="2" height="2.2" fill="#5d275d"/><rect x="316.9" y="171.5" width="2" height="2.2" fill="#3b5dc9"/><rect x="321.2" y="171.5" width="2" height="2.2" fill="#5d275d"/><rect x="325.5" y="171.5" width="2" height="2.2" fill="#5d275d"/><rect x="329.8" y="171.5" width="2" height="2.2" fill="#c87c2a"/><rect x="304.0" y="175.6" width="2" height="2.2" fill="#5d275d"/><rect x="308.3" y="175.6" width="2" height="2.2" fill="#38b764"/><rect x="312.6" y="175.6" width="2" height="2.2" fill="#c87c2a"/><rect x="316.9" y="175.6" width="2" height="2.2" fill="#b13e53"/><rect x="321.2" y="175.6" width="2" height="2.2" fill="#3b5dc9"/><rect x="325.5" y="175.6" width="2" height="2.2" fill="#a7f070"/><rect x="329.8" y="175.6" width="2" height="2.2" fill="#c87c2a"/><rect x="304.0" y="179.7" width="2" height="2.2" fill="#ef7d57"/><rect x="308.3" y="179.7" width="2" height="2.2" fill="#38b764"/><rect x="312.6" y="179.7" width="2" height="2.2" fill="#3b5dc9"/>
<path d="M394 153l1.2 3h3l-2.5 2 1 3-2.7-1.8-2.7 1.8 1-3-2.5-2h3z" fill="#fff" stroke="#000" stroke-width=".5"/><ellipse cx="411" cy="162" rx="3" ry="2" fill="none" stroke="#5b7fc9" stroke-width="1"/><ellipse cx="418" cy="162" rx="3" ry="2" fill="#fff" stroke="#333" stroke-width=".5"/><ellipse cx="412" cy="169" rx="3.5" ry="2.5" fill="#8fd3ff" stroke="#333" stroke-width=".5"/><path d="M383 167h5l1 6h-7z" fill="#fff"/><rect x="368" y="166" width="4" height="4" fill="#fff"/><rect x="368" y="171" width="4" height="4" fill="#fff"/><rect x="366" y="177" width="4" height="4" fill="#fff"/><rect x="371" y="177" width="4" height="4" fill="#fff"/><rect x="366" y="182" width="4" height="3.5" fill="#fff"/><rect x="371" y="182" width="4" height="3.5" fill="#fff"/><circle cx="395" cy="180" r="3" fill="#000"/><path d="M392 179.5h6v-1a3 3 0 0 0-6 0z" fill="#fff"/>
<path d="M288 1078L392 1064V1078Z" fill="#161616"/><path d="M276 1064.5v13" stroke="#555" stroke-width="1.2"/><path d="M402 1071h11M428 1071h11M433.5 1065.5v11" stroke="#c8c8c8" stroke-width="1.2"/><path d="M447.5 1067v10M455.5 1065v8" stroke="#777" stroke-width="1"/>
<circle cx="573" cy="106.5" r="3.5" fill="#c8c8c8"/>
<path d="M694.5 101.5l9 9M703.5 101.5l-9 9" stroke="#d0d0d0" stroke-width="1.2"/>
<path d="M1493 103.5l4 4 4-4" fill="none" stroke="#9a9a9a" stroke-width="1"/>
<g transform="translate(905 375)"><path d="M80 7C88 7 92 14 96 24L104 41C106 45 108 46 113 46.5L142 49C150 50 154 56 153 62C152 68 145 73 134 82C124 89 121 92 122 99L127 122C129 130 126 135 118 135C110 135 100 130 93 125C86 120 83 119 80 119C77 119 74 120 67 125C60 130 50 135 42 135C34 135 31 130 33 122L38 99C39 92 36 89 26 82C15 73 8 68 7 62C6 56 10 50 18 49L47 46.5C52 46 54 45 56 41L64 24C68 14 72 7 80 7Z" transform="translate(0 10)" fill="#000" stroke="#000" stroke-width="3"/><path d="M80 7C88 7 92 14 96 24L104 41C106 45 108 46 113 46.5L142 49C150 50 154 56 153 62C152 68 145 73 134 82C124 89 121 92 122 99L127 122C129 130 126 135 118 135C110 135 100 130 93 125C86 120 83 119 80 119C77 119 74 120 67 125C60 130 50 135 42 135C34 135 31 130 33 122L38 99C39 92 36 89 26 82C15 73 8 68 7 62C6 56 10 50 18 49L47 46.5C52 46 54 45 56 41L64 24C68 14 72 7 80 7Z" fill="#fff" stroke="#000" stroke-linejoin="round" stroke-linecap="round" stroke-width="2"/></g>
<path transform="translate(780 545)" d="M33 9L73 9C77 9 79 12 80 16L95 96C96 100 95 103 92 105C84 111 70 115 53 115C37 115 22 111 14 105C11 103 11 100 12 96L26 16C27 12 29 9 33 9Z" fill="#fff"/>
<g transform="translate(500 580)"><path d="M55 16C58 11 62 10 66 10C68 10 70 11 71 11C73 8 77 7 81 7C85 7 88 9 91 11C93 10 95 10 96 10C101 10 107 13 110 17L110 66C106 71 101 74 95 74C93 74 91 74 89 73C86 74 82 75 78 75C74 75 70 74 68 72C67 72 66 73 63 73C60 73 56 72 54 68Z" fill="#fff"/><path d="M55 16C58 11 62 10 66 10C68 10 70 11 71 11C73 8 77 7 81 7C85 7 88 9 91 11C93 10 95 10 96 10C101 10 107 13 110 17" fill="none" stroke="#000" stroke-linejoin="round" stroke-linecap="round" stroke-width="1.8"/><path d="M54 68C56 72 60 73 63 73C66 73 67 72 68 72C70 74 74 75 78 75C82 75 86 74 89 73C91 74 93 74 95 74C101 74 106 71 110 66" fill="none" stroke="#000" stroke-linejoin="round" stroke-linecap="round" stroke-width="1.8"/></g>
<g transform="translate(500.5 656)"><path d="M55 16C58 11 62 10 66 10C68 10 70 11 71 11C73 8 77 7 81 7C85 7 88 9 91 11C93 10 95 10 96 10C101 10 107 13 110 17L110 66C106 71 101 74 95 74C93 74 91 74 89 73C86 74 82 75 78 75C74 75 70 74 68 72C67 72 66 73 63 73C60 73 56 72 54 68Z" fill="#fff"/><path d="M55 16C58 11 62 10 66 10C68 10 70 11 71 11C73 8 77 7 81 7C85 7 88 9 91 11C93 10 95 10 96 10C101 10 107 13 110 17" fill="none" stroke="#000" stroke-linejoin="round" stroke-linecap="round" stroke-width="1.8"/><path d="M54 68C56 72 60 73 63 73C66 73 67 72 68 72C70 74 74 75 78 75C82 75 86 74 89 73C91 74 93 74 95 74C101 74 106 71 110 66" fill="none" stroke="#000" stroke-linejoin="round" stroke-linecap="round" stroke-width="1.8"/></g>
<g transform="translate(500 735)"><path d="M65 12C60 6 55 5 50 7C47 8 45 9 43 10C38 7 30 7 25 9C20 11 17 15 16 20C10 23 6 30 6 37C6 46 10 54 18 57C22 58 22 60 23 61C27 66 33 67 37 66C40 65 43 66 45 67C50 69 55 69 60 67C65 65 69 62 71 58Z" fill="#fff"/><path d="M65 12C60 6 55 5 50 7C47 8 45 9 43 10C38 7 30 7 25 9C20 11 17 15 16 20C10 23 6 30 6 37C6 46 10 54 18 57C22 58 22 60 23 61C27 66 33 67 37 66C40 65 43 66 45 67C50 69 55 69 60 67C65 65 69 62 71 58" fill="none" stroke="#000" stroke-linejoin="round" stroke-linecap="round" stroke-width="1.8"/><path d="M101 11C106 7 112 6 117 7C121 8 123 9 125 10C128 9 133 9 136 11C138 12 139 14 140 14C147 15 152 20 153 28C158 30 159 35 159 39C158 42 156 45 155 48C155 53 152 58 143 58C142 62 138 66 130 67C124 67 121 65 119 65C114 67 108 67 102 65C98 64 95 61 94 56Z" fill="#fff"/><path d="M101 11C106 7 112 6 117 7C121 8 123 9 125 10C128 9 133 9 136 11C138 12 139 14 140 14C147 15 152 20 153 28C158 30 159 35 159 39C158 42 156 45 155 48C155 53 152 58 143 58C142 62 138 66 130 67C124 67 121 65 119 65C114 67 108 67 102 65C98 64 95 61 94 56" fill="none" stroke="#000" stroke-linejoin="round" stroke-linecap="round" stroke-width="1.8"/><path d="M63 86C59 81 54 80 49 80C46 80 43 82 41 83C36 81 28 81 22 84C21 87 20 90 19 90C12 91 9 96 9 102C9 104 10 106 11 107C8 109 6 113 6 117C6 121 9 125 13 126C13 131 17 135 22 135C24 135 26 135 27 134C31 139 38 141 43 140C47 141 50 142 55 142C62 142 66 137 68 130Z" fill="#fff"/><path d="M63 86C59 81 54 80 49 80C46 80 43 82 41 83C36 81 28 81 22 84C21 87 20 90 19 90C12 91 9 96 9 102C9 104 10 106 11 107C8 109 6 113 6 117C6 121 9 125 13 126C13 131 17 135 22 135C24 135 26 135 27 134C31 139 38 141 43 140C47 141 50 142 55 142C62 142 66 137 68 130" fill="none" stroke="#000" stroke-linejoin="round" stroke-linecap="round" stroke-width="1.8"/><path d="M100 86C103 82 106 80 109 80C113 80 114 83 116 84C120 82 125 81 129 82C133 83 135 85 137 87C143 87 150 90 152 97C152 101 153 104 153 105C157 107 159 113 159 118C159 124 157 128 155 131C150 131 149 133 148 135C145 140 140 141 135 141C132 141 129 141 126 139C122 142 118 143 113 143C107 143 103 139 101 134Z" fill="#fff"/><path d="M100 86C103 82 106 80 109 80C113 80 114 83 116 84C120 82 125 81 129 82C133 83 135 85 137 87C143 87 150 90 152 97C152 101 153 104 153 105C157 107 159 113 159 118C159 124 157 128 155 131C150 131 149 133 148 135C145 140 140 141 135 141C132 141 129 141 126 139C122 142 118 143 113 143C107 143 103 139 101 134" fill="none" stroke="#000" stroke-linejoin="round" stroke-linecap="round" stroke-width="1.8"/></g>
<circle cx="990.2" cy="804.4" r="38" fill="#000" stroke="#000" stroke-width="1.5"/><path d="M953 804C955 785 970 767 990 767C1010 767 1026 785 1027 804C1026 808 1020 809 1012 808C1004 807 998 805 990 805C982 805 976 807 968 808C960 809 955 808 953 804Z" fill="#fff"/>
<g transform="translate(1205 565)" stroke="#000" stroke-linejoin="round" stroke-linecap="round" stroke-width="1.7">
<path d="M19.5 76C28 98 50 103 66 103C85 103 108 98 118 77Z" fill="#8fd3ff"/>
<path d="M18 58C12 61 7 64 5.5 68C8 72 14 74 19 76C45 83 90 83 118 77C124 75 129 72 131 69C128 65 122 61 116 57C90 62 45 62 18 58Z" fill="#8fd3ff"/>
<path d="M18.5 57C22 25 40 9 66 9C92 9 110 25 116 57" fill="none"/>
<path d="M27 60C24 63 21 67 22 70C22 72 23 74 23 75M52 62C50 66 49 70 49 74C49 77 50 79 50 81M78 62C80 66 83 70 84 74C84 77 83 80 83 82M106 60C109 63 112 66 113 69C113 72 112 75 112 77" fill="none" stroke-width="1.5"/>
</g>
<g transform="translate(1315 455)" stroke="#000" stroke-linejoin="round" stroke-linecap="round" stroke-width="1.5">
<path d="M20 74C28 85 45 90 60 90C78 90 95 85 99 74" fill="none"/>
<path d="M17.5 46C10 50 5 55 5 59C5 66 25 76 58 79C90 79 116 66 116 59C116 55 110 50 101 46" fill="none"/>
<path d="M20.5 48C23 30 35 18 46 15C55 18 63 18 70 15C85 18 95 30 98 47C80 53 68 56 58 56C45 56 32 53 20.5 48Z" fill="#fff" stroke-width="1.8"/>
<path d="M17.5 46C19 28 32 15 45 11M101 46C99 28 88 15 72 11" fill="none"/>
<path d="M24 52C20 57 16 62 16 66C16 69 16 70 16 71M48 57C46 62 44 66 44 71C44 74 45 76 45 78M70 57C72 62 74 66 74 71C74 74 73 76 72 78M95 52C99 56 103 61 104 64C104 67 104 68 104 69" fill="none" stroke-width="1.4"/>
<ellipse cx="58.3" cy="13.3" rx="13.5" ry="5.8" fill="#91db69" stroke-width="1.6"/>
</g>
<g transform="translate(1190 455)" stroke="#000" stroke-linejoin="round" stroke-linecap="round" stroke-width="2">
<path d="M18 74C28 85 45 89 57 89C70 89 88 85 97 75C85 79 70 80 57 80C45 80 28 79 18 74Z" fill="#4d9be6"/>
<path d="M57 80V89M36 79L42 87M78 79L72 87" fill="none" stroke-width="1.2"/>
<path d="M17 47C20 26 38 12 57.5 12C77 12 96 26 100 47C85 54 70 56 57 56C44 56 30 54 17 47Z" fill="#8fd3ff"/>
<path d="M22 45C23 33 28.5 24.5 38.5 19.5C35.5 27 33 38 32 50.5C28 49.5 25 48 22 45ZM40 55C40.5 41 42 29 46 23L70 23C74 29 76 41 76.5 55C67 56.5 49 56.5 40 55ZM95.5 45C94.5 33 89 24.5 79 19.5C82 27 84.5 38 85.5 50.5C89.5 49.5 92.5 48 95.5 45Z" fill="#91db69"/>
<path d="M4 58C4 52 10 48 17 46C30 53 45 56 57 56C70 56 85 53 100 46C108 48 115 52 115 58C115 66 90 79 57 79C25 79 4 66 4 58Z" fill="#8fd3ff"/>
<path d="M4 58C4 52 10 48 17 46L22 52C18 58 15 65 14 70C8 67 4 63 4 58Z M46 56C52 57 64 57 70 56C72 65 73 72 72 78C64 79 52 79 44 78C43 72 44 65 46 56Z M115 58C115 52 109 48 100 46L95 52C99 58 102 65 103 70C109 67 115 63 115 58Z" fill="#f68f7c"/>
<ellipse cx="57.5" cy="12.7" rx="12.5" ry="6.5" fill="#f68f7c"/>
<ellipse cx="57.5" cy="12.5" rx="6.5" ry="2.2" fill="#f5e67c" stroke-width="1"/>
<g stroke-width="1"><ellipse cx="12" cy="55.5" rx="2.3" ry="1.8" fill="#f5e67c"/><ellipse cx="57.5" cy="66" rx="2.6" ry="2" fill="#f5e67c"/><ellipse cx="105.5" cy="55.5" rx="2.3" ry="1.8" fill="#f5e67c"/><ellipse cx="30.5" cy="62.5" rx="2.3" ry="2" fill="#8ff8e2"/><ellipse cx="86" cy="62.5" rx="2.3" ry="2" fill="#8ff8e2"/></g>
</g>
<path d="M1518 67.5l-5 5 5 5M1541.5 67.5l5 5-5 5M1546.5 67.5l5 5-5 5M1807.5 67.5l5 5-5 5M1835.5 67.5l5 5-5 5M1840.5 67.5l5 5-5 5" fill="none" stroke="#8c8c8c" stroke-width="1.1"/>
<g fill="none" stroke="#b4b4b4" stroke-width="1.3" stroke-linejoin="round"><path d="M1521 102v-3h7l2 2h11v17h-20z"/><path d="M1521 102h20" /></g><path d="M1521.5 99h6.5l2 2.5h-8.5z" fill="#b4b4b4"/><path d="M1524 107l14 10M1538 107l-14 10" stroke="#b4b4b4" stroke-width="3.5"/>
<g fill="none" stroke="#b4b4b4" stroke-width="1.3" stroke-linejoin="round"><path d="M1521 148v-3h7l2 2h11v17h-20z"/><path d="M1521 148h20" /></g><path d="M1521.5 145h6.5l2 2.5h-8.5z" fill="#b4b4b4"/><circle cx="1525" cy="152" r="0.9" fill="#b4b4b4"/><circle cx="1525" cy="158" r="0.9" fill="#b4b4b4"/><circle cx="1528" cy="155" r="0.9" fill="#b4b4b4"/><circle cx="1528" cy="161" r="0.9" fill="#b4b4b4"/><circle cx="1531" cy="152" r="0.9" fill="#b4b4b4"/><circle cx="1531" cy="158" r="0.9" fill="#b4b4b4"/><circle cx="1534" cy="155" r="0.9" fill="#b4b4b4"/><circle cx="1534" cy="161" r="0.9" fill="#b4b4b4"/><circle cx="1537" cy="152" r="0.9" fill="#b4b4b4"/><circle cx="1537" cy="158" r="0.9" fill="#b4b4b4"/>
<g fill="none" stroke="#b4b4b4" stroke-width="1.3" stroke-linejoin="round"><path d="M1521 194v-3h7l2 2h11v17h-20z"/><path d="M1521 194h20" /></g><path d="M1521.5 191h6.5l2 2.5h-8.5z" fill="#b4b4b4"/><rect x="1525.5" y="195.5" width="11" height="11" fill="none" stroke="#b4b4b4" stroke-width="1.1"/><path d="M1526 199h10M1530 199v7M1526 203h4" stroke="#b4b4b4" stroke-width="1.1"/>
<g fill="none" stroke="#b4b4b4" stroke-width="1.3" stroke-linejoin="round"><path d="M1521 240v-3h7l2 2h11v17h-20z"/><path d="M1521 240h20" /></g><path d="M1521.5 237h6.5l2 2.5h-8.5z" fill="#b4b4b4"/><path d="M1524 241l5 4M1538 241l-5 4M1524 253l5-4M1538 253l-5 4M1531 240v3M1531 254v-3" stroke="#b4b4b4" stroke-width="1.5"/>
<g fill="none" stroke="#b4b4b4" stroke-width="1.3" stroke-linejoin="round"><path d="M1521 286v-3h7l2 2h11v17h-20z"/><path d="M1521 286h20" /></g><path d="M1521.5 283h6.5l2 2.5h-8.5z" fill="#b4b4b4"/><rect x="1525.5" y="287.5" width="11" height="11" fill="none" stroke="#b4b4b4" stroke-width="1.1"/><path d="M1526 298l3-5 3 3 4-4v6z" fill="#6a6a6a"/>
<g fill="none" stroke="#b4b4b4" stroke-width="1.3" stroke-linejoin="round"><path d="M1521 332v-3h7l2 2h11v17h-20z"/><path d="M1521 332h20" /></g><path d="M1521.5 329h6.5l2 2.5h-8.5z" fill="#b4b4b4"/><rect x="1525.5" y="333.5" width="11" height="11" fill="none" stroke="#b4b4b4" stroke-width="1.1"/><path d="M1530 341l6-7 2 2-6 7-3 1z" fill="#b4b4b4"/>
<g fill="none" stroke="#b4b4b4" stroke-width="1.3" stroke-linejoin="round"><path d="M1521 378v-3h7l2 2h11v17h-20z"/><path d="M1521 378h20" /></g><path d="M1521.5 375h6.5l2 2.5h-8.5z" fill="#b4b4b4"/><g transform="translate(1531 385) scale(1)" fill="none" stroke="#b4b4b4" stroke-width="1.1"><path d="M0 -6l5.5 3v6.5l-5.5 3-5.5-3v-6.5z"/><path d="M-5.5 -3l5.5 3 5.5-3M0 0v6.5"/></g>
<g fill="none" stroke="#b4b4b4" stroke-width="1.3" stroke-linejoin="round"><path d="M1521 424v-3h7l2 2h11v17h-20z"/><path d="M1521 424h20" /></g><path d="M1521.5 421h6.5l2 2.5h-8.5z" fill="#b4b4b4"/><g transform="translate(1531 431) scale(1)" fill="none" stroke="#b4b4b4" stroke-width="1.1"><path d="M0 -6l5.5 3v6.5l-5.5 3-5.5-3v-6.5z"/><path d="M-5.5 -3l5.5 3 5.5-3M0 0v6.5"/></g>
<path d="M1563.5 94.5h9M1563.5 98.5h9M1563.5 102.5h9" stroke="#777" stroke-width="1"/>
<g fill="none" stroke="#b4b4b4" stroke-width="1.2" stroke-linejoin="round"><path d="M1589 96l8-4.5 8 4.5-8 4.5z"/><path d="M1589 100l8 4.5 8-4.5M1589 104l8 4.5 8-4.5"/></g>
<g fill="none" stroke="#6a6a6a" stroke-width="1.2"><rect x="1659" y="98" width="18" height="10"/><path d="M1659 94l17-3 1 4-17 3z"/></g><path d="M1667 101v6l4-3z" fill="#6a6a6a"/><path d="M1700 108l5-9a7 7 0 1 1 5 9z" fill="none" stroke="#6a6a6a" stroke-width="1.3"/><path d="M1699 108l4-7 5 7z" fill="#6a6a6a"/>
<path d="M1588.5 124.5l4.5 4.5 4.5-4.5M1683.5 124.5l4.5 4.5 4.5-4.5" fill="none" stroke="#b4b4b4" stroke-width="1.1"/>
<path d="M1835 124l4.5-4.5 4.5 4.5M1835 130l4.5 4.5 4.5-4.5" fill="none" stroke="#b4b4b4" stroke-width="1"/>
<g fill="none" stroke="#b4b4b4" stroke-width="1.2">
<rect x="1596.5" y="145.5" width="12" height="12" rx="2" stroke-dasharray="2 1.5"/>
<path d="M1616 149l8 3 8-3M1616 156l8-3 8 3"/><path d="M1669 151a5 5 0 0 1 10 0"/>
<path d="M1741.5 151l4 4 4-4M1787.5 151l4 4 4-4M1833 150l5 5 5-5" stroke-width="1.1"/>
</g>
<rect x="1592" y="148" width="11" height="11" rx="2" fill="#5a5a5a"/><rect x="1594" y="146" width="10" height="10" rx="1.5" fill="#b4b4b4"/>
<path d="M1622 160h4l-1-8h-2z" fill="#b4b4b4"/><rect x="1622.5" y="147" width="3" height="4" fill="#b4b4b4"/>

<rect x="1667" y="151" width="14" height="10" rx="1.5" fill="#b4b4b4"/>
<g fill="#b4b4b4"><rect x="1695" y="145" width="5" height="5"/><rect x="1705" y="145" width="5" height="5"/><rect x="1700" y="150" width="5" height="5"/><rect x="1705" y="155" width="5" height="5"/><rect x="1692" y="154" width="8" height="7" rx="1"/></g>
<path d="M1694 154a3 3 0 0 1 6 0" fill="none" stroke="#b4b4b4" stroke-width="1.2"/>
<g fill="#6a6a6a"><rect x="1719" y="144" width="14" height="14" rx="3"/><path d="M1764 160l13-13h-13z"/></g>
<path d="M1729 155l6 6M1735 155l-6 6" stroke="#6a6a6a" stroke-width="1.5"/><rect x="1722" y="147" width="8" height="8" rx="2" fill="#2f2f2f"/>
<g transform="translate(1781.5 156) scale(0.7)" fill="none" stroke="#6a6a6a" stroke-width="1.1"><path d="M0 -6l5.5 3v6.5l-5.5 3-5.5-3v-6.5z"/><path d="M-5.5 -3l5.5 3 5.5-3M0 0v6.5"/></g>
<rect x="1808" y="144" width="12" height="12" fill="#ffffff"/><rect x="1812" y="148" width="13" height="13" fill="#ffffff" stroke="#3a3a3a" stroke-width="1"/><rect x="1808" y="143" width="11" height="11" fill="#3c8cec"/>

<g fill="none" stroke="#b4b4b4" stroke-width="1.2" stroke-linejoin="round"><rect x="1561.5" y="172.5" width="16" height="16" rx="2"/><path d="M1562 180.5h15M1564 175.5h3M1564 178h3M1564 183h3M1564 185.5h3"/><path d="M1669 189h-15.5v-16h15.5v9"/><path d="M1653.5 189l5-5"/><rect x="1678.5" y="172.5" width="16" height="16" rx="1"/></g><path d="M1701 189v-15.5a1 1 0 0 1 1-1h5l2 2h9a1 1 0 0 1 1 1v13z" fill="#b4b4b4"/><g transform="translate(1686.5 180) scale(0.85)" fill="none" stroke="#b4b4b4" stroke-width="1.1"><path d="M0 -6l5.5 3v6.5l-5.5 3-5.5-3v-6.5z"/><path d="M-5.5 -3l5.5 3 5.5-3M0 0v6.5"/></g><circle cx="1668.5" cy="187" r="5" fill="#b4b4b4" stroke="#333" stroke-width="1.2"/><path d="M1668.5 184v6M1665.5 187h6" stroke="#333" stroke-width="1.3"/><circle cx="1693" cy="187" r="5" fill="#b4b4b4" stroke="#333" stroke-width="1.2"/><path d="M1693 184v6M1690 187h6" stroke="#333" stroke-width="1.3"/><circle cx="1718" cy="187" r="5" fill="#b4b4b4" stroke="#333" stroke-width="1.2"/><path d="M1718 184v6M1715 187h6" stroke="#333" stroke-width="1.3"/><g fill="none" stroke="#5e5e5e" stroke-width="1.2"><rect x="1734.5" y="171.5" width="11" height="11" rx="2"/><rect x="1727.5" y="178.5" width="11" height="11" rx="2"/><rect x="1759.5" y="171.5" width="11" height="11" rx="2"/><rect x="1752.5" y="178.5" width="11" height="11" rx="2"/><path d="M1730 187l5-5M1730 182.5v4.5h4.5M1755 187l5-5M1755 182.5v4.5h4.5"/><path d="M1808 175h-5a1.5 1.5 0 0 0-1.5 1.5v11a1.5 1.5 0 0 0 1.5 1.5h4"/></g><rect x="1737" y="174" width="6" height="6" fill="#5e5e5e"/><rect x="1778" y="171" width="18" height="18" rx="3" fill="#b4b4b4"/><circle cx="1787" cy="180" r="5.2" fill="#333"/><rect x="1806" y="176" width="17" height="14" rx="3" fill="#5e5e5e"/><circle cx="1814.5" cy="183" r="3.8" fill="#333"/><path d="M1811 180h-7l2.5-2.5M1804 180l2.5 2.5" stroke="#5e5e5e" stroke-width="1.2" fill="none"/><g fill="none" stroke="#b4b4b4" stroke-width="1.2"><path d="M1829 174h15M1831 174v15.5h11v-15.5M1834 177v10M1836.5 177v10M1839 177v10M1834.5 174v-2h5v2"/></g>
<path d="M1837 207l3.5-3.5 3.5 3.5M1837 1068l3.5 3.5 3.5-3.5" fill="none" stroke="#b4b4b4" stroke-width="1"/>
<path d="M1561.5 216.5c3.5-8.5 13.5-8.5 17 0" fill="none" stroke="#b4b4b4" stroke-width="1.8" stroke-linecap="round"/><circle cx="1570" cy="215" r="4" fill="#b4b4b4"/>
<path d="M1608 214l5.5 5.5 5.5-5.5" fill="none" stroke="#b4b4b4" stroke-width="1.3"/>
<path d="M1630 222v-14a1 1 0 0 1 1-1h6l2 2h8a1 1 0 0 1 1 1v2" fill="none" stroke="#b4b4b4" stroke-width="1.3"/><path d="M1630 222l3-9h18l-3 9z" fill="#b4b4b4"/>
<path d="M1561.5 254.5c3.5-8.5 13.5-8.5 17 0" fill="none" stroke="#b4b4b4" stroke-width="1.8" stroke-linecap="round"/><circle cx="1570" cy="253" r="4" fill="#b4b4b4"/>
<path d="M1628 252l5.5 5.5 5.5-5.5" fill="none" stroke="#b4b4b4" stroke-width="1.3"/>
<path d="M1650 260v-14a1 1 0 0 1 1-1h6l2 2h8a1 1 0 0 1 1 1v2" fill="none" stroke="#b4b4b4" stroke-width="1.3"/><path d="M1650 260l3-9h18l-3 9z" fill="#b4b4b4"/>
<path d="M1561.5 292.5c3.5-8.5 13.5-8.5 17 0" fill="none" stroke="#b4b4b4" stroke-width="1.8" stroke-linecap="round"/><circle cx="1570" cy="291" r="4" fill="#b4b4b4"/>
<g stroke="#777" stroke-width="1.3"><path d="M1675 282h16M1675 288h16M1675 294h16"/></g><g fill="#333"><path d="M1683 281l2.5 3.5h-5z"/><path d="M1683 287l2.5 3.5h-5z"/><path d="M1683 293l2.5 3.5h-5z"/></g><path d="M1695 292l3 3 6-6" fill="none" stroke="#b4b4b4" stroke-width="1.5"/>
<path d="M1813 288v-3a3.5 3.5 0 0 1 7 0v3" fill="none" stroke="#b4b4b4" stroke-width="1.6"/><rect x="1810" y="288" width="13" height="9" rx="1.5" fill="#b4b4b4"/>
<path d="M1561.5 330.5c3.5-8.5 13.5-8.5 17 0" fill="none" stroke="#b4b4b4" stroke-width="1.8" stroke-linecap="round"/><circle cx="1570" cy="329" r="4" fill="#b4b4b4"/>
<path d="M1586 333l10-10c1-1 3-1 4 0s1 3 0 4l-10 10-5 1z" fill="#b4b4b4"/><path d="M1585 337.5h16" stroke="#b4b4b4" stroke-width="1.5"/><path d="M1586.5 332.5l4 4" stroke="#424e63" stroke-width="0.8"/>
<path d="M1668 329l2-2 1 2" stroke="#f0c080" stroke-width="1" fill="none"/>
<path d="M1561.5 368.5c3.5-8.5 13.5-8.5 17 0" fill="none" stroke="#b4b4b4" stroke-width="1.8" stroke-linecap="round"/><circle cx="1570" cy="367" r="4" fill="#b4b4b4"/>
<path d="M1590.5 376h7l-1.5-11h-4z" fill="#b4b4b4"/><rect x="1591.5" y="360" width="5" height="5" fill="none" stroke="#b4b4b4" stroke-width="1.2"/><path d="M1584 359l7 2.5M1604 359l-7 2.5M1585 368l6-2.5M1603 368l-6-2.5" stroke="#b4b4b4" stroke-width="1.1"/>
<rect x="1688.5" y="356.5" width="15" height="15" rx="3" fill="none" stroke="#555" stroke-width="1.3"/><g transform="translate(1696 364) scale(0.95)" fill="none" stroke="#555" stroke-width="1.3"><path d="M0 -6l5.5 3v6.5l-5.5 3-5.5-3v-6.5z"/><path d="M-5.5 -3l5.5 3 5.5-3M0 0v6.5"/></g>
<path d="M1561.5 406.5c3.5-8.5 13.5-8.5 17 0" fill="none" stroke="#b4b4b4" stroke-width="1.8" stroke-linecap="round"/><circle cx="1570" cy="405" r="4" fill="#b4b4b4"/>
<path d="M1674 407l3 3 6-7" fill="none" stroke="#b4b4b4" stroke-width="1.6"/><path d="M1692 420v-20h20z M1696 410v-6h6z" fill="#b4b4b4" fill-rule="evenodd"/><circle cx="1706.5" cy="415.5" r="5" fill="#222"/><g transform="translate(1706.5 415.5) scale(0.7)" fill="none" stroke="#b4b4b4" stroke-width="1.1"><path d="M0 -6l5.5 3v6.5l-5.5 3-5.5-3v-6.5z"/><path d="M-5.5 -3l5.5 3 5.5-3M0 0v6.5"/></g>
<rect x="1646.0" y="440.0" width="2" height="2" fill="#fff"/><rect x="1650.5" y="440.0" width="2.5" height="2" fill="#6b3e75"/><rect x="1653.5" y="440.0" width="2.5" height="2" fill="#6b3e75"/><rect x="1657.5" y="440.0" width="2.5" height="2" fill="#6b3e75"/><rect x="1661.0" y="440.0" width="1.5" height="2" fill="#6b3e75"/><rect x="1646.0" y="446.0" width="2" height="2" fill="#6b3e75"/><rect x="1649.0" y="446.0" width="1.5" height="2" fill="#cd683d"/><rect x="1653.0" y="446.0" width="1.5" height="2" fill="#cd683d"/><rect x="1655.0" y="446.0" width="1.5" height="2" fill="#cd683d"/><rect x="1657.0" y="446.0" width="2.5" height="2" fill="#cd683d"/>
<path d="M1810 430.5h9v7.5l-2.5 7h-4l-2.5-7z" fill="#b4b4b4"/><path d="M1814.5 440.5c-1.5-1.5-3-3-3-5 0-1.5 1.5-2 3-0.5 1.5-1.5 3-1 3 .5 0 2-1.5 3.5-3 5z" fill="#222"/><path d="M1815.5 446.5c3-4 8-4 10.5-1" fill="none" stroke="#b4b4b4" stroke-width="1.1"/><path d="M1824.5 443.5l1.5 2.5-2.5 1" fill="none" stroke="#b4b4b4" stroke-width="1.1"/>
<path d="M1628 480l5.5 5.5 5.5-5.5" fill="none" stroke="#b4b4b4" stroke-width="1.3"/>
<path d="M1650 488v-14a1 1 0 0 1 1-1h6l2 2h8a1 1 0 0 1 1 1v2" fill="none" stroke="#b4b4b4" stroke-width="1.3"/><path d="M1650 488l3-9h18l-3 9z" fill="#b4b4b4"/>
<path d="M1785 468.5h9v7.5l-2.5 7h-4l-2.5-7z" fill="#b4b4b4"/><path d="M1789.5 478.5c-1.5-1.5-3-3-3-5 0-1.5 1.5-2 3-0.5 1.5-1.5 3-1 3 .5 0 2-1.5 3.5-3 5z" fill="#222"/><path d="M1790.5 484.5c3-4 8-4 10.5-1" fill="none" stroke="#b4b4b4" stroke-width="1.1"/><path d="M1799.5 481.5l1.5 2.5-2.5 1" fill="none" stroke="#b4b4b4" stroke-width="1.1"/>
<path d="M1813 478v-3a3.5 3.5 0 0 1 7 0v3" fill="none" stroke="#b4b4b4" stroke-width="1.6"/><rect x="1810" y="478" width="13" height="9" rx="1.5" fill="#b4b4b4"/>
<rect x="1657" y="508" width="6" height="3" fill="#ffffff"/><rect x="1663" y="508" width="6" height="3" fill="#cdcdcd"/><rect x="1669" y="508" width="6" height="3" fill="#ffffff"/><rect x="1675" y="508" width="6" height="3" fill="#cdcdcd"/><rect x="1681" y="508" width="6" height="3" fill="#ffffff"/><rect x="1687" y="508" width="1" height="3" fill="#cdcdcd"/><rect x="1657" y="528" width="6" height="3" fill="#ffffff"/><rect x="1663" y="528" width="6" height="3" fill="#cdcdcd"/><rect x="1669" y="528" width="6" height="3" fill="#ffffff"/><rect x="1675" y="528" width="6" height="3" fill="#cdcdcd"/><rect x="1681" y="528" width="6" height="3" fill="#ffffff"/><rect x="1687" y="528" width="1" height="3" fill="#cdcdcd"/><rect x="1657" y="511" width="31" height="17" fill="#ee1111"/><rect x="1660.0" y="514.2" width="1.5" height="2" fill="#f5e67c"/><rect x="1662.0" y="514.2" width="2.5" height="2" fill="#f5e67c"/><rect x="1666.0" y="514.2" width="2" height="2" fill="#f5e67c"/><rect x="1668.5" y="514.2" width="2.5" height="2" fill="#8fd3ff"/><rect x="1672.0" y="514.2" width="1.5" height="2" fill="#f5e67c"/><rect x="1675.0" y="514.2" width="1.5" height="2" fill="#fff"/><rect x="1677.0" y="514.2" width="2.5" height="2" fill="#f5e67c"/><rect x="1682.0" y="514.2" width="2.5" height="2" fill="#f0a0a0"/><rect x="1660.0" y="518.5" width="2" height="2" fill="#f0a0a0"/><rect x="1663.5" y="518.5" width="2" height="2" fill="#f5e67c"/><rect x="1666.5" y="518.5" width="2.5" height="2" fill="#f5e67c"/><rect x="1669.5" y="518.5" width="2.5" height="2" fill="#8fd3ff"/><rect x="1674.5" y="518.5" width="2" height="2" fill="#f0a0a0"/><rect x="1678.0" y="518.5" width="2.5" height="2" fill="#fff"/><rect x="1681.0" y="518.5" width="2.5" height="2" fill="#f0a0a0"/><rect x="1684.5" y="518.5" width="2" height="2" fill="#f5e67c"/><rect x="1660.0" y="522.8" width="2" height="2" fill="#fff"/><rect x="1662.5" y="522.8" width="2.5" height="2" fill="#8fd3ff"/><rect x="1666.5" y="522.8" width="2.5" height="2" fill="#8fd3ff"/><rect x="1671.5" y="522.8" width="2.5" height="2" fill="#f0a0a0"/><rect x="1674.5" y="522.8" width="1.5" height="2" fill="#8fd3ff"/><rect x="1678.5" y="522.8" width="2.5" height="2" fill="#fff"/><rect x="1681.5" y="522.8" width="2.5" height="2" fill="#8fd3ff"/>
<rect x="1708.5" y="508.5" width="15" height="15" rx="1" fill="none" stroke="#555" stroke-width="1.3"/><path d="M1709 523l4-6 3 3 4-4 3 3v4z" fill="#999"/><circle cx="1720.5" cy="521" r="5" fill="#fff" stroke="#555" stroke-width="1"/><g transform="translate(1720.5 521) scale(0.6)" fill="none" stroke="#555" stroke-width="1.1"><path d="M0 -6l5.5 3v6.5l-5.5 3-5.5-3v-6.5z"/><path d="M-5.5 -3l5.5 3 5.5-3M0 0v6.5"/></g>
<path d="M1785 506.5h9v7.5l-2.5 7h-4l-2.5-7z" fill="#6e6e6e"/><path d="M1789.5 516.5c-1.5-1.5-3-3-3-5 0-1.5 1.5-2 3-0.5 1.5-1.5 3-1 3 .5 0 2-1.5 3.5-3 5z" fill="#222"/><path d="M1790.5 522.5c3-4 8-4 10.5-1" fill="none" stroke="#6e6e6e" stroke-width="1.1"/><path d="M1799.5 519.5l1.5 2.5-2.5 1" fill="none" stroke="#6e6e6e" stroke-width="1.1"/>
<path d="M1813 516v-3a3.5 3.5 0 0 1 7 0v3" fill="none" stroke="#6e6e6e" stroke-width="1.6"/><rect x="1810" y="516" width="13" height="9" rx="1.5" fill="#6e6e6e"/>
<path d="M1590.5 566h7l-1.5-11h-4z" fill="#b4b4b4"/><rect x="1591.5" y="550" width="5" height="5" fill="none" stroke="#b4b4b4" stroke-width="1.2"/><path d="M1584 549l7 2.5M1604 549l-7 2.5M1585 558l6-2.5M1603 558l-6-2.5" stroke="#b4b4b4" stroke-width="1.1"/>
<rect x="1708.5" y="546.5" width="15" height="15" rx="3" fill="none" stroke="#555" stroke-width="1.3"/><g transform="translate(1716 554) scale(0.95)" fill="none" stroke="#555" stroke-width="1.3"><path d="M0 -6l5.5 3v6.5l-5.5 3-5.5-3v-6.5z"/><path d="M-5.5 -3l5.5 3 5.5-3M0 0v6.5"/></g>
<path d="M1785 544.5h9v7.5l-2.5 7h-4l-2.5-7z" fill="#6e6e6e"/><path d="M1789.5 554.5c-1.5-1.5-3-3-3-5 0-1.5 1.5-2 3-0.5 1.5-1.5 3-1 3 .5 0 2-1.5 3.5-3 5z" fill="#222"/><path d="M1790.5 560.5c3-4 8-4 10.5-1" fill="none" stroke="#6e6e6e" stroke-width="1.1"/><path d="M1799.5 557.5l1.5 2.5-2.5 1" fill="none" stroke="#6e6e6e" stroke-width="1.1"/>
<path d="M1813 554v-3a3.5 3.5 0 0 1 7 0v3" fill="none" stroke="#6e6e6e" stroke-width="1.6"/><rect x="1810" y="554" width="13" height="9" rx="1.5" fill="#6e6e6e"/>
<circle cx="1677" cy="596" r="2" fill="#1ebc73"/>
<path d="M1785 582.5h9v7.5l-2.5 7h-4l-2.5-7z" fill="#6e6e6e"/><path d="M1789.5 592.5c-1.5-1.5-3-3-3-5 0-1.5 1.5-2 3-0.5 1.5-1.5 3-1 3 .5 0 2-1.5 3.5-3 5z" fill="#222"/><path d="M1790.5 598.5c3-4 8-4 10.5-1" fill="none" stroke="#6e6e6e" stroke-width="1.1"/><path d="M1799.5 595.5l1.5 2.5-2.5 1" fill="none" stroke="#6e6e6e" stroke-width="1.1"/>
<path d="M1813 592v-3a3.5 3.5 0 0 1 7 0v3" fill="none" stroke="#6e6e6e" stroke-width="1.6"/><rect x="1810" y="592" width="13" height="9" rx="1.5" fill="#6e6e6e"/>
<rect x="1684" y="625" width="3" height="17" fill="#e8e8ff"/><rect x="1659.0" y="628.2" width="2" height="2" fill="#8fd3ff"/><rect x="1662.5" y="628.2" width="1.5" height="2" fill="#8fd3ff"/><rect x="1665.5" y="628.2" width="1.5" height="2" fill="#f5e67c"/><rect x="1669.5" y="628.2" width="1.5" height="2" fill="#fff"/><rect x="1672.5" y="628.2" width="1.5" height="2" fill="#fff"/><rect x="1676.5" y="628.2" width="2" height="2" fill="#8fd3ff"/><rect x="1679.0" y="628.2" width="1.5" height="2" fill="#8fd3ff"/><rect x="1659.0" y="632.5" width="2.5" height="2" fill="#f68181"/><rect x="1662.5" y="632.5" width="2" height="2" fill="#f68181"/><rect x="1667.0" y="632.5" width="2" height="2" fill="#8fd3ff"/><rect x="1670.0" y="632.5" width="1.5" height="2" fill="#f5e67c"/><rect x="1672.5" y="632.5" width="1.5" height="2" fill="#fff"/><rect x="1675.0" y="632.5" width="1.5" height="2" fill="#8fd3ff"/><rect x="1677.5" y="632.5" width="2" height="2" fill="#f68181"/><rect x="1680.0" y="632.5" width="1.5" height="2" fill="#8fd3ff"/><rect x="1659.0" y="636.8" width="2.5" height="2" fill="#f68181"/><rect x="1662.5" y="636.8" width="2.5" height="2" fill="#f5e67c"/><rect x="1667.5" y="636.8" width="2.5" height="2" fill="#8fd3ff"/><rect x="1672.5" y="636.8" width="2" height="2" fill="#8fd3ff"/><rect x="1675.0" y="636.8" width="2" height="2" fill="#8fd3ff"/><rect x="1677.5" y="636.8" width="1.5" height="2" fill="#f5e67c"/><rect x="1680.0" y="636.8" width="2" height="2" fill="#fff"/><rect x="1682.5" y="636.8" width="2" height="2" fill="#f5e67c"/>
<path d="M1785 620.5h9v7.5l-2.5 7h-4l-2.5-7z" fill="#6e6e6e"/><path d="M1789.5 630.5c-1.5-1.5-3-3-3-5 0-1.5 1.5-2 3-0.5 1.5-1.5 3-1 3 .5 0 2-1.5 3.5-3 5z" fill="#222"/><path d="M1790.5 636.5c3-4 8-4 10.5-1" fill="none" stroke="#6e6e6e" stroke-width="1.1"/><path d="M1799.5 633.5l1.5 2.5-2.5 1" fill="none" stroke="#6e6e6e" stroke-width="1.1"/>
<path d="M1813 630v-3a3.5 3.5 0 0 1 7 0v3" fill="none" stroke="#6e6e6e" stroke-width="1.6"/><rect x="1810" y="630" width="13" height="9" rx="1.5" fill="#6e6e6e"/>
<rect x="1708.5" y="660.5" width="15" height="15" rx="3" fill="none" stroke="#555" stroke-width="1.3"/><g transform="translate(1716 668) scale(0.95)" fill="none" stroke="#555" stroke-width="1.3"><path d="M0 -6l5.5 3v6.5l-5.5 3-5.5-3v-6.5z"/><path d="M-5.5 -3l5.5 3 5.5-3M0 0v6.5"/></g>
<path d="M1785 658.5h9v7.5l-2.5 7h-4l-2.5-7z" fill="#6e6e6e"/><path d="M1789.5 668.5c-1.5-1.5-3-3-3-5 0-1.5 1.5-2 3-0.5 1.5-1.5 3-1 3 .5 0 2-1.5 3.5-3 5z" fill="#222"/><path d="M1790.5 674.5c3-4 8-4 10.5-1" fill="none" stroke="#6e6e6e" stroke-width="1.1"/><path d="M1799.5 671.5l1.5 2.5-2.5 1" fill="none" stroke="#6e6e6e" stroke-width="1.1"/>
<path d="M1813 668v-3a3.5 3.5 0 0 1 7 0v3" fill="none" stroke="#6e6e6e" stroke-width="1.6"/><rect x="1810" y="668" width="13" height="9" rx="1.5" fill="#6e6e6e"/>
<rect x="1661.0" y="704.8" width="1.5" height="2" fill="#f9c22b"/><rect x="1663.5" y="704.8" width="2.5" height="2" fill="#333"/><rect x="1667.5" y="704.8" width="2.5" height="2" fill="#333"/><rect x="1670.5" y="704.8" width="1.5" height="2" fill="#f9c22b"/><rect x="1674.5" y="704.8" width="1.5" height="2" fill="#1ebc73"/><rect x="1677.5" y="704.8" width="2.5" height="2" fill="#1ebc73"/><rect x="1682.5" y="704.8" width="1.5" height="2" fill="#333"/><rect x="1661.0" y="708.5" width="2" height="2" fill="#4d9be6"/><rect x="1665.5" y="708.5" width="2" height="2" fill="#333"/><rect x="1668.5" y="708.5" width="1.5" height="2" fill="#1ebc73"/><rect x="1671.5" y="708.5" width="2" height="2" fill="#e83b3b"/><rect x="1674.0" y="708.5" width="1.5" height="2" fill="#f9c22b"/><rect x="1677.0" y="708.5" width="1.5" height="2" fill="#f9c22b"/><rect x="1679.0" y="708.5" width="2.5" height="2" fill="#1ebc73"/><rect x="1682.0" y="708.5" width="2.5" height="2" fill="#1ebc73"/><rect x="1661.0" y="712.2" width="1.5" height="2" fill="#1ebc73"/><rect x="1663.5" y="712.2" width="2.5" height="2" fill="#f9c22b"/><rect x="1667.5" y="712.2" width="2.5" height="2" fill="#e83b3b"/><rect x="1671.0" y="712.2" width="1.5" height="2" fill="#4d9be6"/><rect x="1673.5" y="712.2" width="1.5" height="2" fill="#f9c22b"/><rect x="1677.5" y="712.2" width="2" height="2" fill="#333"/><rect x="1680.0" y="712.2" width="2" height="2" fill="#4d9be6"/><rect x="1683.5" y="712.2" width="1.5" height="2" fill="#f9c22b"/>
<path d="M1785 696.5h9v7.5l-2.5 7h-4l-2.5-7z" fill="#6e6e6e"/><path d="M1789.5 706.5c-1.5-1.5-3-3-3-5 0-1.5 1.5-2 3-0.5 1.5-1.5 3-1 3 .5 0 2-1.5 3.5-3 5z" fill="#222"/><path d="M1790.5 712.5c3-4 8-4 10.5-1" fill="none" stroke="#6e6e6e" stroke-width="1.1"/><path d="M1799.5 709.5l1.5 2.5-2.5 1" fill="none" stroke="#6e6e6e" stroke-width="1.1"/>
<path d="M1813 706v-3a3.5 3.5 0 0 1 7 0v3" fill="none" stroke="#6e6e6e" stroke-width="1.6"/><rect x="1810" y="706" width="13" height="9" rx="1.5" fill="#6e6e6e"/>
<rect x="1657" y="736" width="6" height="3" fill="#ffffff"/><rect x="1663" y="736" width="6" height="3" fill="#cdcdcd"/><rect x="1669" y="736" width="6" height="3" fill="#ffffff"/><rect x="1675" y="736" width="6" height="3" fill="#cdcdcd"/><rect x="1681" y="736" width="6" height="3" fill="#ffffff"/><rect x="1687" y="736" width="1" height="3" fill="#cdcdcd"/><rect x="1657" y="756" width="6" height="3" fill="#ffffff"/><rect x="1663" y="756" width="6" height="3" fill="#cdcdcd"/><rect x="1669" y="756" width="6" height="3" fill="#ffffff"/><rect x="1675" y="756" width="6" height="3" fill="#cdcdcd"/><rect x="1681" y="756" width="6" height="3" fill="#ffffff"/><rect x="1687" y="756" width="1" height="3" fill="#cdcdcd"/><rect x="1657" y="739" width="31" height="17" fill="#e8b0e8"/><rect x="1661.0" y="742.8" width="2" height="2" fill="#1ebc73"/><rect x="1664.5" y="742.8" width="1.5" height="2" fill="#e83b3b"/><rect x="1666.5" y="742.8" width="1.5" height="2" fill="#4d9be6"/><rect x="1669.0" y="742.8" width="2" height="2" fill="#e83b3b"/><rect x="1673.5" y="742.8" width="2.5" height="2" fill="#f9c22b"/><rect x="1676.5" y="742.8" width="2" height="2" fill="#1ebc73"/><rect x="1679.0" y="742.8" width="2.5" height="2" fill="#333"/><rect x="1684.0" y="742.8" width="2.5" height="2" fill="#e83b3b"/><rect x="1661.0" y="746.5" width="1.5" height="2" fill="#4d9be6"/><rect x="1664.0" y="746.5" width="1.5" height="2" fill="#4d9be6"/><rect x="1668.0" y="746.5" width="2" height="2" fill="#333"/><rect x="1671.0" y="746.5" width="1.5" height="2" fill="#e83b3b"/><rect x="1673.0" y="746.5" width="1.5" height="2" fill="#f9c22b"/><rect x="1677.0" y="746.5" width="2.5" height="2" fill="#e83b3b"/><rect x="1682.0" y="746.5" width="2.5" height="2" fill="#1ebc73"/><rect x="1661.0" y="750.2" width="2.5" height="2" fill="#f9c22b"/><rect x="1664.5" y="750.2" width="1.5" height="2" fill="#333"/><rect x="1666.5" y="750.2" width="2.5" height="2" fill="#e83b3b"/><rect x="1671.5" y="750.2" width="1.5" height="2" fill="#e83b3b"/><rect x="1673.5" y="750.2" width="2" height="2" fill="#e83b3b"/><rect x="1677.0" y="750.2" width="2.5" height="2" fill="#e83b3b"/><rect x="1681.0" y="750.2" width="2" height="2" fill="#f9c22b"/>
<rect x="1708.5" y="736.5" width="15" height="15" rx="1" fill="none" stroke="#555" stroke-width="1.3"/><path d="M1709 751l4-6 3 3 4-4 3 3v4z" fill="#999"/><circle cx="1720.5" cy="749" r="5" fill="#fff" stroke="#555" stroke-width="1"/><g transform="translate(1720.5 749) scale(0.6)" fill="none" stroke="#555" stroke-width="1.1"><path d="M0 -6l5.5 3v6.5l-5.5 3-5.5-3v-6.5z"/><path d="M-5.5 -3l5.5 3 5.5-3M0 0v6.5"/></g>
<path d="M1785 734.5h9v7.5l-2.5 7h-4l-2.5-7z" fill="#6e6e6e"/><path d="M1789.5 744.5c-1.5-1.5-3-3-3-5 0-1.5 1.5-2 3-0.5 1.5-1.5 3-1 3 .5 0 2-1.5 3.5-3 5z" fill="#222"/><path d="M1790.5 750.5c3-4 8-4 10.5-1" fill="none" stroke="#6e6e6e" stroke-width="1.1"/><path d="M1799.5 747.5l1.5 2.5-2.5 1" fill="none" stroke="#6e6e6e" stroke-width="1.1"/>
<path d="M1813 744v-3a3.5 3.5 0 0 1 7 0v3" fill="none" stroke="#6e6e6e" stroke-width="1.6"/><rect x="1810" y="744" width="13" height="9" rx="1.5" fill="#6e6e6e"/>
<rect x="1662.0" y="782.2" width="1.5" height="2" fill="#333"/><rect x="1665.0" y="782.2" width="2" height="2" fill="#f9c22b"/><rect x="1669.5" y="782.2" width="2.5" height="2" fill="#e83b3b"/><rect x="1662.0" y="786.8" width="2.5" height="2" fill="#f9c22b"/><rect x="1665.0" y="786.8" width="2" height="2" fill="#e83b3b"/><rect x="1667.5" y="786.8" width="1.5" height="2" fill="#e83b3b"/><rect x="1676.0" y="782.2" width="2" height="2" fill="#f9c22b"/><rect x="1678.5" y="782.2" width="2.5" height="2" fill="#333"/><rect x="1682.5" y="782.2" width="2.5" height="2" fill="#f9c22b"/><rect x="1676.0" y="786.8" width="1.5" height="2" fill="#f9c22b"/><rect x="1678.0" y="786.8" width="1.5" height="2" fill="#e83b3b"/><rect x="1681.0" y="786.8" width="1.5" height="2" fill="#333"/>
<path d="M1785 772.5h9v7.5l-2.5 7h-4l-2.5-7z" fill="#6e6e6e"/><path d="M1789.5 782.5c-1.5-1.5-3-3-3-5 0-1.5 1.5-2 3-0.5 1.5-1.5 3-1 3 .5 0 2-1.5 3.5-3 5z" fill="#222"/><path d="M1790.5 788.5c3-4 8-4 10.5-1" fill="none" stroke="#6e6e6e" stroke-width="1.1"/><path d="M1799.5 785.5l1.5 2.5-2.5 1" fill="none" stroke="#6e6e6e" stroke-width="1.1"/>
<path d="M1813 782v-3a3.5 3.5 0 0 1 7 0v3" fill="none" stroke="#6e6e6e" stroke-width="1.6"/><rect x="1810" y="782" width="13" height="9" rx="1.5" fill="#6e6e6e"/>
<rect x="1657" y="812" width="6" height="3" fill="#fff"/><rect x="1663" y="812" width="6" height="3" fill="#000"/><rect x="1669" y="812" width="6" height="3" fill="#fff"/><rect x="1675" y="812" width="6" height="3" fill="#000"/><rect x="1681" y="812" width="6" height="3" fill="#fff"/><rect x="1687" y="812" width="1" height="3" fill="#000"/><rect x="1657" y="832" width="6" height="3" fill="#fff"/><rect x="1663" y="832" width="6" height="3" fill="#000"/><rect x="1669" y="832" width="6" height="3" fill="#fff"/><rect x="1675" y="832" width="6" height="3" fill="#000"/><rect x="1681" y="832" width="6" height="3" fill="#fff"/><rect x="1687" y="832" width="1" height="3" fill="#000"/><rect x="1657" y="815" width="31" height="17" fill="#b02030"/><rect x="1680" y="815" width="8" height="17" fill="#3050a0"/><rect x="1668" y="818" width="9" height="10" fill="#6a2a40"/><path d="M1672 817l1 2h2l-1.5 1.5.5 2-2-1-2 1 .5-2-1.5-1.5h2z" fill="#f9c22b"/>
<rect x="1708.5" y="812.5" width="15" height="15" rx="1" fill="none" stroke="#555" stroke-width="1.3"/><path d="M1709 827l4-6 3 3 4-4 3 3v4z" fill="#999"/><circle cx="1720.5" cy="825" r="5" fill="#fff" stroke="#555" stroke-width="1"/><g transform="translate(1720.5 825) scale(0.6)" fill="none" stroke="#555" stroke-width="1.1"><path d="M0 -6l5.5 3v6.5l-5.5 3-5.5-3v-6.5z"/><path d="M-5.5 -3l5.5 3 5.5-3M0 0v6.5"/></g>
<path d="M1785 810.5h9v7.5l-2.5 7h-4l-2.5-7z" fill="#6e6e6e"/><path d="M1789.5 820.5c-1.5-1.5-3-3-3-5 0-1.5 1.5-2 3-0.5 1.5-1.5 3-1 3 .5 0 2-1.5 3.5-3 5z" fill="#222"/><path d="M1790.5 826.5c3-4 8-4 10.5-1" fill="none" stroke="#6e6e6e" stroke-width="1.1"/><path d="M1799.5 823.5l1.5 2.5-2.5 1" fill="none" stroke="#6e6e6e" stroke-width="1.1"/>
<path d="M1813 820v-3a3.5 3.5 0 0 1 7 0v3" fill="none" stroke="#6e6e6e" stroke-width="1.6"/><rect x="1810" y="820" width="13" height="9" rx="1.5" fill="#6e6e6e"/>
<rect x="1674" y="864" width="6" height="2" fill="#e83b3b"/>
<path d="M1785 848.5h9v7.5l-2.5 7h-4l-2.5-7z" fill="#6e6e6e"/><path d="M1789.5 858.5c-1.5-1.5-3-3-3-5 0-1.5 1.5-2 3-0.5 1.5-1.5 3-1 3 .5 0 2-1.5 3.5-3 5z" fill="#222"/><path d="M1790.5 864.5c3-4 8-4 10.5-1" fill="none" stroke="#6e6e6e" stroke-width="1.1"/><path d="M1799.5 861.5l1.5 2.5-2.5 1" fill="none" stroke="#6e6e6e" stroke-width="1.1"/>
<path d="M1813 858v-3a3.5 3.5 0 0 1 7 0v3" fill="none" stroke="#6e6e6e" stroke-width="1.6"/><rect x="1810" y="858" width="13" height="9" rx="1.5" fill="#6e6e6e"/>
<circle cx="1673" cy="900" r="1" fill="#a2d048"/>
<path d="M1785 886.5h9v7.5l-2.5 7h-4l-2.5-7z" fill="#6e6e6e"/><path d="M1789.5 896.5c-1.5-1.5-3-3-3-5 0-1.5 1.5-2 3-0.5 1.5-1.5 3-1 3 .5 0 2-1.5 3.5-3 5z" fill="#222"/><path d="M1790.5 902.5c3-4 8-4 10.5-1" fill="none" stroke="#6e6e6e" stroke-width="1.1"/><path d="M1799.5 899.5l1.5 2.5-2.5 1" fill="none" stroke="#6e6e6e" stroke-width="1.1"/>
<path d="M1813 896v-3a3.5 3.5 0 0 1 7 0v3" fill="none" stroke="#6e6e6e" stroke-width="1.6"/><rect x="1810" y="896" width="13" height="9" rx="1.5" fill="#6e6e6e"/>
<circle cx="1669" cy="940" r="1" fill="#a2d048"/>
<path d="M1785 924.5h9v7.5l-2.5 7h-4l-2.5-7z" fill="#6e6e6e"/><path d="M1789.5 934.5c-1.5-1.5-3-3-3-5 0-1.5 1.5-2 3-0.5 1.5-1.5 3-1 3 .5 0 2-1.5 3.5-3 5z" fill="#222"/><path d="M1790.5 940.5c3-4 8-4 10.5-1" fill="none" stroke="#6e6e6e" stroke-width="1.1"/><path d="M1799.5 937.5l1.5 2.5-2.5 1" fill="none" stroke="#6e6e6e" stroke-width="1.1"/>
<path d="M1813 934v-3a3.5 3.5 0 0 1 7 0v3" fill="none" stroke="#6e6e6e" stroke-width="1.6"/><rect x="1810" y="934" width="13" height="9" rx="1.5" fill="#6e6e6e"/>
<path d="M1668 974q5-4 10 0" fill="none" stroke="#e83b3b" stroke-width="2"/>
<path d="M1785 962.5h9v7.5l-2.5 7h-4l-2.5-7z" fill="#6e6e6e"/><path d="M1789.5 972.5c-1.5-1.5-3-3-3-5 0-1.5 1.5-2 3-0.5 1.5-1.5 3-1 3 .5 0 2-1.5 3.5-3 5z" fill="#222"/><path d="M1790.5 978.5c3-4 8-4 10.5-1" fill="none" stroke="#6e6e6e" stroke-width="1.1"/><path d="M1799.5 975.5l1.5 2.5-2.5 1" fill="none" stroke="#6e6e6e" stroke-width="1.1"/>
<path d="M1813 972v-3a3.5 3.5 0 0 1 7 0v3" fill="none" stroke="#6e6e6e" stroke-width="1.6"/><rect x="1810" y="972" width="13" height="9" rx="1.5" fill="#6e6e6e"/>
<rect x="1669" y="1010" width="8" height="7" fill="#f5d58a"/>
<path d="M1785 1000.5h9v7.5l-2.5 7h-4l-2.5-7z" fill="#6e6e6e"/><path d="M1789.5 1010.5c-1.5-1.5-3-3-3-5 0-1.5 1.5-2 3-0.5 1.5-1.5 3-1 3 .5 0 2-1.5 3.5-3 5z" fill="#222"/><path d="M1790.5 1016.5c3-4 8-4 10.5-1" fill="none" stroke="#6e6e6e" stroke-width="1.1"/><path d="M1799.5 1013.5l1.5 2.5-2.5 1" fill="none" stroke="#6e6e6e" stroke-width="1.1"/>
<path d="M1813 1010v-3a3.5 3.5 0 0 1 7 0v3" fill="none" stroke="#6e6e6e" stroke-width="1.6"/><rect x="1810" y="1010" width="13" height="9" rx="1.5" fill="#6e6e6e"/>
<path d="M1561.5 1052.5c3.5-8.5 13.5-8.5 17 0" fill="none" stroke="#b4b4b4" stroke-width="1.8" stroke-linecap="round"/><circle cx="1570" cy="1051" r="4" fill="#b4b4b4"/>
<path d="M1614 1050l5.5 5.5 5.5-5.5" fill="none" stroke="#b4b4b4" stroke-width="1.3"/>
<path d="M1635 1058v-14a1 1 0 0 1 1-1h6l2 2h8a1 1 0 0 1 1 1v2" fill="none" stroke="#b4b4b4" stroke-width="1.3"/><path d="M1635 1058l3-9h18l-3 9z" fill="#b4b4b4"/>
<path d="M1785 1038.5h9v7.5l-2.5 7h-4l-2.5-7z" fill="#b4b4b4"/><path d="M1789.5 1048.5c-1.5-1.5-3-3-3-5 0-1.5 1.5-2 3-0.5 1.5-1.5 3-1 3 .5 0 2-1.5 3.5-3 5z" fill="#222"/><path d="M1790.5 1054.5c3-4 8-4 10.5-1" fill="none" stroke="#b4b4b4" stroke-width="1.1"/><path d="M1799.5 1051.5l1.5 2.5-2.5 1" fill="none" stroke="#b4b4b4" stroke-width="1.1"/>
<path d="M1813 1048v-3a3.5 3.5 0 0 1 7 0v3" fill="none" stroke="#b4b4b4" stroke-width="1.6"/><rect x="1810" y="1048" width="13" height="9" rx="1.5" fill="#b4b4b4"/>
<path d="M1642 146.5h9v7.5l-2.5 7h-4l-2.5-7z" fill="#b4b4b4"/><path d="M1646.5 156.5c-1.5-1.5-3-3-3-5 0-1.5 1.5-2 3-0.5 1.5-1.5 3-1 3 .5 0 2-1.5 3.5-3 5z" fill="#222"/><path d="M1647.5 162.5c3-4 8-4 10.5-1" fill="none" stroke="#b4b4b4" stroke-width="1.1"/><path d="M1656.5 159.5l1.5 2.5-2.5 1" fill="none" stroke="#b4b4b4" stroke-width="1.1"/></svg></body></html>
